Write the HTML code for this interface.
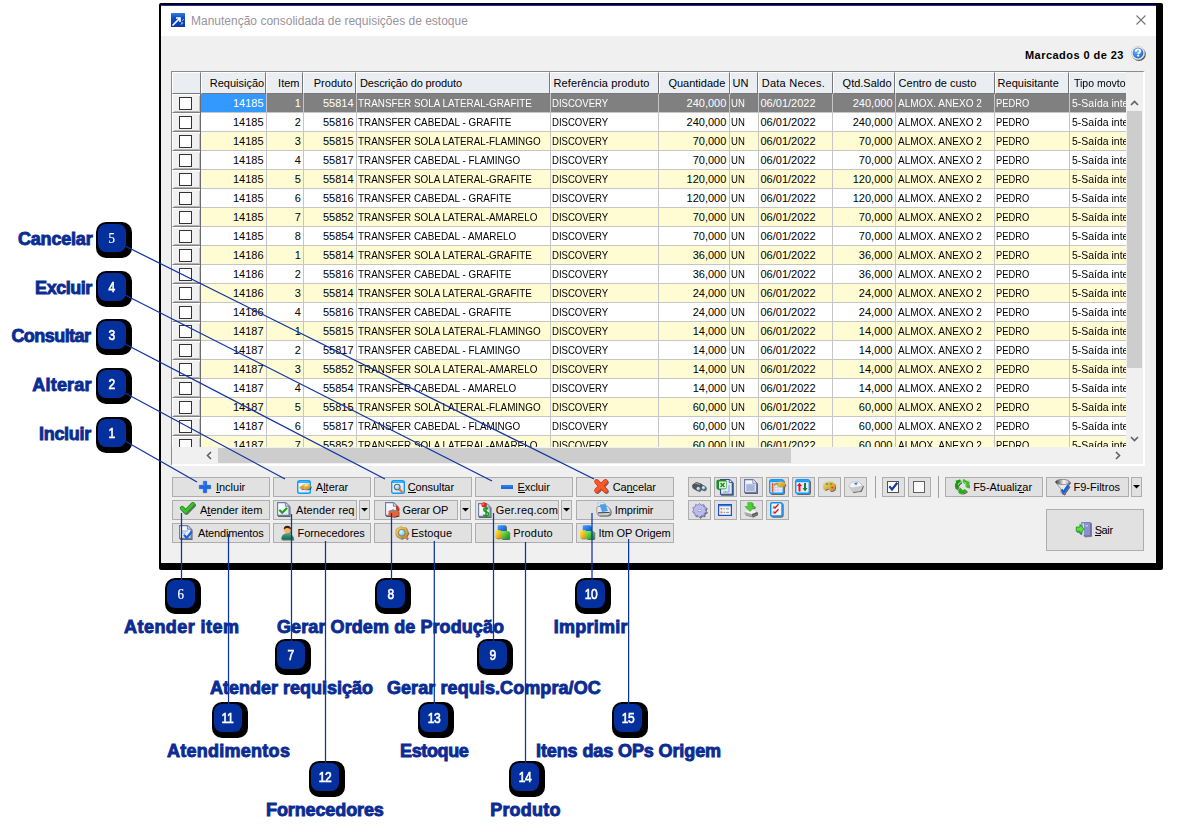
<!DOCTYPE html>
<html><head><meta charset="utf-8"><title>Manutenção consolidada de requisições de estoque</title>
<style>
*{box-sizing:border-box}
body{margin:0;width:1180px;height:838px;background:#fff;position:relative;overflow:hidden;font-family:"Liberation Sans",sans-serif;font-size:11px;color:#000}
.a{position:absolute}
.t{position:absolute;white-space:nowrap;line-height:1}
.btn{position:absolute;background:#e1e1e1;border:1px solid #adadad}
.hc{position:absolute;top:72px;height:22px;background:#eaedf1;border-top:1px solid #fff;border-left:1px solid #fff;border-right:1px solid #76787c;border-bottom:1px solid #76787c}
.lbl{position:absolute;white-space:nowrap;line-height:1;font-weight:bold;font-size:18px;color:#0b2c92;-webkit-text-stroke:0.9px #0b2c92}
.bub{position:absolute;width:36px;height:36px;background:#000;border-radius:10px}
.bub i{position:absolute;left:2px;top:2px;width:28px;height:28px;background:#04309e;border-radius:8px;font-style:normal;color:#fff;font-weight:normal;font-size:14px;line-height:28px;text-align:center;-webkit-text-stroke:0.6px #fff}
.bub i.s{font-family:"Liberation Serif",serif;font-size:15px;-webkit-text-stroke:0.2px #fff}
.bub i.d{letter-spacing:-0.4px;text-indent:-0.4px}
.bub b{display:inline-block;font-weight:normal;transform:scaleX(0.86)}
</style></head><body>

<div class="a" style="left:159px;top:3px;width:1004px;height:567px;background:#000;border-radius:2px"></div>
<div class="a" style="left:161px;top:5px;width:995px;height:558px;background:#f0f0f0"></div>
<div class="a" style="left:161px;top:5px;width:995px;height:1px;background:#2424c8"></div>
<div class="a" style="left:161px;top:6px;width:995px;height:30px;background:#fff"></div>
<svg class="a" style="left:171px;top:13px" width="14" height="14" viewBox="0 0 14 14">
<defs><linearGradient id="tg" x1="0" y1="0" x2="0" y2="1"><stop offset="0" stop-color="#3a7ae0"/><stop offset="0.35" stop-color="#0c4cc0"/><stop offset="1" stop-color="#0a3aa8"/></linearGradient></defs>
<rect width="14" height="14" fill="url(#tg)"/>
<path d="M1.5 12.5 L8 6 M5 5 L9 5 L9 9" stroke="#fff" stroke-width="1.6" fill="none"/>
<path d="M10 12 l1-3 l1 2 M11 8 l2-2" stroke="#9cc0f0" stroke-width="0.8" fill="none"/>
</svg>
<div class="t" style="left:191px;top:15px;font-size:12px;color:#9a939c">Manutenção consolidada de requisições de estoque</div>
<svg class="a" style="left:1136px;top:15px" width="10" height="10"><path d="M0.5 0.5 L9.5 9.5 M9.5 0.5 L0.5 9.5" stroke="#767676" stroke-width="1.1"/></svg>
<div class="t" style="left:1025px;top:50px;font-weight:bold;letter-spacing:0.45px;color:#000">Marcados 0 de 23</div>
<svg class="a" style="left:1130px;top:45px" width="18" height="18" viewBox="0 0 18 18">
<defs><radialGradient id="hg" cx="0.4" cy="0.35" r="0.75"><stop offset="0" stop-color="#7ab8f8"/><stop offset="0.7" stop-color="#2a7ae0"/><stop offset="1" stop-color="#1a5cc0"/></radialGradient>
<filter id="hb"><feGaussianBlur stdDeviation="0.7"/></filter></defs>
<circle cx="9" cy="9.2" r="6.8" fill="#3a3a3a" filter="url(#hb)" opacity="0.85"/>
<circle cx="8" cy="8" r="6.7" fill="#f4f0ec" stroke="#c8c0b8" stroke-width="0.6"/>
<circle cx="8" cy="8" r="5.4" fill="url(#hg)"/>
<path d="M5.7 6.6 Q5.8 4.4 8 4.4 Q10.3 4.4 10.3 6.3 Q10.3 7.5 8.6 8.2 L8.1 9" stroke="#fff" stroke-width="1.7" fill="none"/>
<rect x="7.2" y="9.9" width="2" height="1.6" fill="#fff"/>
</svg>
<div class="a" style="left:171px;top:71px;width:974px;height:395px;background:#f0f0f0;border-top:1px solid #8c8c8c;border-left:1px solid #8c8c8c;border-right:2px solid #fff;border-bottom:2px solid #fff"></div>
<div class="hc" style="left:172px;width:29px"></div>
<div class="hc" style="left:201px;width:65px"></div>
<div class="hc" style="left:266px;width:37px"></div>
<div class="hc" style="left:303px;width:53px"></div>
<div class="hc" style="left:356px;width:194px"></div>
<div class="hc" style="left:550px;width:109px"></div>
<div class="hc" style="left:659px;width:71px"></div>
<div class="hc" style="left:730px;width:28px"></div>
<div class="hc" style="left:758px;width:75px"></div>
<div class="hc" style="left:833px;width:62px"></div>
<div class="hc" style="left:895px;width:100px"></div>
<div class="hc" style="left:995px;width:74px"></div>
<div class="hc" style="left:1069px;width:57px;border-right:none"></div>
<div class="t" style="left:144.2px;width:120px;text-align:right;top:78px">Requisição</div>
<div class="t" style="left:179.5px;width:120px;text-align:right;top:78px">Item</div>
<div class="t" style="left:232.3px;width:120px;text-align:right;top:78px">Produto</div>
<div class="t" style="left:360px;top:78px;letter-spacing:-0.13px">Descrição do produto</div>
<div class="t" style="left:553.5px;top:78px;letter-spacing:0.14px">Referência produto</div>
<div class="t" style="left:605.3px;width:120px;text-align:right;top:78px">Quantidade</div>
<div class="t" style="left:732.6px;top:78px;letter-spacing:0px">UN</div>
<div class="t" style="left:761.7px;top:78px;letter-spacing:0.26px">Data Neces.</div>
<div class="t" style="left:771.5px;width:120px;text-align:right;top:78px">Qtd.Saldo</div>
<div class="t" style="left:898.6px;top:78px;letter-spacing:0px">Centro de custo</div>
<div class="t" style="left:997.6px;top:78px;letter-spacing:0px">Requisitante</div>
<div class="a" style="left:1073.8px;top:74px;overflow:hidden;height:18px;width:52.200000000000045px"><div class="t" style="left:0;top:4px;transform:scaleX(0.955);transform-origin:0 0">Tipo movto</div></div>
<div class="a" style="left:172px;top:94px;width:954px;height:353px;overflow:hidden">
<div class="a" style="left:0;top:0px;width:28px;height:19px;background:#f0f0f0;border-top:1px solid #fff;border-left:1px solid #fff;border-bottom:1px solid #808080"></div>
<div class="a" style="left:2px;top:17px;width:26px;height:1px;background:#b4b4b4"></div>
<div class="a" style="left:27px;top:2px;width:1px;height:16px;background:#c4c4c4"></div>
<div class="a" style="left:7px;top:3px;width:13px;height:13px;background:#fff;border:1px solid #333"></div>
<div class="a" style="left:29px;top:0px;width:925px;height:18px;background:#808080"></div>
<div class="a" style="left:29px;top:0px;width:65px;height:18px;background:#3399ff"></div>
<div class="a" style="left:29px;top:18px;width:925px;height:1px;background:#c6c6c6"></div>
<div class="t" style="left:-8.5px;width:100px;text-align:right;top:4px;color:#fff">14185</div>
<div class="t" style="left:28.8px;width:100px;text-align:right;top:4px;color:#fff">1</div>
<div class="t" style="left:81.5px;width:100px;text-align:right;top:4px;color:#fff">55814</div>
<div class="t" style="left:185.6px;top:4px;color:#fff;transform:scaleX(0.898);transform-origin:0 0;">TRANSFER SOLA LATERAL-GRAFITE</div>
<div class="t" style="left:380.2px;top:4px;color:#fff;transform:scaleX(0.87);transform-origin:0 0;">DISCOVERY</div>
<div class="t" style="left:454.3px;width:100px;text-align:right;top:4px;color:#fff">240,000</div>
<div class="t" style="left:558.9px;top:4px;color:#fff;transform:scaleX(0.87);transform-origin:0 0;">UN</div>
<div class="t" style="left:588.5px;top:4px;color:#fff;">06/01/2022</div>
<div class="t" style="left:620.5px;width:100px;text-align:right;top:4px;color:#fff">240,000</div>
<div class="t" style="left:725.6px;top:4px;color:#fff;transform:scaleX(0.915);transform-origin:0 0;">ALMOX. ANEXO 2</div>
<div class="t" style="left:823.8px;top:4px;color:#fff;transform:scaleX(0.85);transform-origin:0 0;">PEDRO</div>
<div class="t" style="left:899.8px;top:4px;color:#fff;transform:scaleX(0.95);transform-origin:0 0;">5-Saída interna</div>
<div class="a" style="left:94px;top:0px;width:1px;height:18px;background:#c6c6c6"></div>
<div class="a" style="left:131px;top:0px;width:1px;height:18px;background:#c6c6c6"></div>
<div class="a" style="left:184px;top:0px;width:1px;height:18px;background:#c6c6c6"></div>
<div class="a" style="left:378px;top:0px;width:1px;height:18px;background:#c6c6c6"></div>
<div class="a" style="left:486px;top:0px;width:1px;height:18px;background:#c6c6c6"></div>
<div class="a" style="left:557px;top:0px;width:1px;height:18px;background:#c6c6c6"></div>
<div class="a" style="left:586px;top:0px;width:1px;height:18px;background:#c6c6c6"></div>
<div class="a" style="left:660px;top:0px;width:1px;height:18px;background:#c6c6c6"></div>
<div class="a" style="left:723px;top:0px;width:1px;height:18px;background:#c6c6c6"></div>
<div class="a" style="left:822px;top:0px;width:1px;height:18px;background:#c6c6c6"></div>
<div class="a" style="left:897px;top:0px;width:1px;height:18px;background:#c6c6c6"></div>
<div class="a" style="left:28px;top:0px;width:1px;height:19px;background:#6c6c70"></div>
<div class="a" style="left:0;top:19px;width:28px;height:19px;background:#f0f0f0;border-top:1px solid #fff;border-left:1px solid #fff;border-bottom:1px solid #808080"></div>
<div class="a" style="left:2px;top:36px;width:26px;height:1px;background:#b4b4b4"></div>
<div class="a" style="left:27px;top:21px;width:1px;height:16px;background:#c4c4c4"></div>
<div class="a" style="left:7px;top:22px;width:13px;height:13px;background:#fff;border:1px solid #333"></div>
<div class="a" style="left:29px;top:19px;width:925px;height:18px;background:#ffffff"></div>
<div class="a" style="left:29px;top:37px;width:925px;height:1px;background:#c6c6c6"></div>
<div class="t" style="left:-8.5px;width:100px;text-align:right;top:23px;color:#000">14185</div>
<div class="t" style="left:28.8px;width:100px;text-align:right;top:23px;color:#000">2</div>
<div class="t" style="left:81.5px;width:100px;text-align:right;top:23px;color:#000">55816</div>
<div class="t" style="left:185.6px;top:23px;color:#000;transform:scaleX(0.898);transform-origin:0 0;">TRANSFER CABEDAL - GRAFITE</div>
<div class="t" style="left:380.2px;top:23px;color:#000;transform:scaleX(0.87);transform-origin:0 0;">DISCOVERY</div>
<div class="t" style="left:454.3px;width:100px;text-align:right;top:23px;color:#000">240,000</div>
<div class="t" style="left:558.9px;top:23px;color:#000;transform:scaleX(0.87);transform-origin:0 0;">UN</div>
<div class="t" style="left:588.5px;top:23px;color:#000;">06/01/2022</div>
<div class="t" style="left:620.5px;width:100px;text-align:right;top:23px;color:#000">240,000</div>
<div class="t" style="left:725.6px;top:23px;color:#000;transform:scaleX(0.915);transform-origin:0 0;">ALMOX. ANEXO 2</div>
<div class="t" style="left:823.8px;top:23px;color:#000;transform:scaleX(0.85);transform-origin:0 0;">PEDRO</div>
<div class="t" style="left:899.8px;top:23px;color:#000;transform:scaleX(0.95);transform-origin:0 0;">5-Saída interna</div>
<div class="a" style="left:94px;top:19px;width:1px;height:18px;background:#c6c6c6"></div>
<div class="a" style="left:131px;top:19px;width:1px;height:18px;background:#c6c6c6"></div>
<div class="a" style="left:184px;top:19px;width:1px;height:18px;background:#c6c6c6"></div>
<div class="a" style="left:378px;top:19px;width:1px;height:18px;background:#c6c6c6"></div>
<div class="a" style="left:486px;top:19px;width:1px;height:18px;background:#c6c6c6"></div>
<div class="a" style="left:557px;top:19px;width:1px;height:18px;background:#c6c6c6"></div>
<div class="a" style="left:586px;top:19px;width:1px;height:18px;background:#c6c6c6"></div>
<div class="a" style="left:660px;top:19px;width:1px;height:18px;background:#c6c6c6"></div>
<div class="a" style="left:723px;top:19px;width:1px;height:18px;background:#c6c6c6"></div>
<div class="a" style="left:822px;top:19px;width:1px;height:18px;background:#c6c6c6"></div>
<div class="a" style="left:897px;top:19px;width:1px;height:18px;background:#c6c6c6"></div>
<div class="a" style="left:28px;top:19px;width:1px;height:19px;background:#6c6c70"></div>
<div class="a" style="left:0;top:38px;width:28px;height:19px;background:#f0f0f0;border-top:1px solid #fff;border-left:1px solid #fff;border-bottom:1px solid #808080"></div>
<div class="a" style="left:2px;top:55px;width:26px;height:1px;background:#b4b4b4"></div>
<div class="a" style="left:27px;top:40px;width:1px;height:16px;background:#c4c4c4"></div>
<div class="a" style="left:7px;top:41px;width:13px;height:13px;background:#fff;border:1px solid #333"></div>
<div class="a" style="left:29px;top:38px;width:925px;height:18px;background:#fffcd4"></div>
<div class="a" style="left:29px;top:56px;width:925px;height:1px;background:#c6c6c6"></div>
<div class="t" style="left:-8.5px;width:100px;text-align:right;top:42px;color:#000">14185</div>
<div class="t" style="left:28.8px;width:100px;text-align:right;top:42px;color:#000">3</div>
<div class="t" style="left:81.5px;width:100px;text-align:right;top:42px;color:#000">55815</div>
<div class="t" style="left:185.6px;top:42px;color:#000;transform:scaleX(0.898);transform-origin:0 0;">TRANSFER SOLA LATERAL-FLAMINGO</div>
<div class="t" style="left:380.2px;top:42px;color:#000;transform:scaleX(0.87);transform-origin:0 0;">DISCOVERY</div>
<div class="t" style="left:454.3px;width:100px;text-align:right;top:42px;color:#000">70,000</div>
<div class="t" style="left:558.9px;top:42px;color:#000;transform:scaleX(0.87);transform-origin:0 0;">UN</div>
<div class="t" style="left:588.5px;top:42px;color:#000;">06/01/2022</div>
<div class="t" style="left:620.5px;width:100px;text-align:right;top:42px;color:#000">70,000</div>
<div class="t" style="left:725.6px;top:42px;color:#000;transform:scaleX(0.915);transform-origin:0 0;">ALMOX. ANEXO 2</div>
<div class="t" style="left:823.8px;top:42px;color:#000;transform:scaleX(0.85);transform-origin:0 0;">PEDRO</div>
<div class="t" style="left:899.8px;top:42px;color:#000;transform:scaleX(0.95);transform-origin:0 0;">5-Saída interna</div>
<div class="a" style="left:94px;top:38px;width:1px;height:18px;background:#c6c6c6"></div>
<div class="a" style="left:131px;top:38px;width:1px;height:18px;background:#c6c6c6"></div>
<div class="a" style="left:184px;top:38px;width:1px;height:18px;background:#c6c6c6"></div>
<div class="a" style="left:378px;top:38px;width:1px;height:18px;background:#c6c6c6"></div>
<div class="a" style="left:486px;top:38px;width:1px;height:18px;background:#c6c6c6"></div>
<div class="a" style="left:557px;top:38px;width:1px;height:18px;background:#c6c6c6"></div>
<div class="a" style="left:586px;top:38px;width:1px;height:18px;background:#c6c6c6"></div>
<div class="a" style="left:660px;top:38px;width:1px;height:18px;background:#c6c6c6"></div>
<div class="a" style="left:723px;top:38px;width:1px;height:18px;background:#c6c6c6"></div>
<div class="a" style="left:822px;top:38px;width:1px;height:18px;background:#c6c6c6"></div>
<div class="a" style="left:897px;top:38px;width:1px;height:18px;background:#c6c6c6"></div>
<div class="a" style="left:28px;top:38px;width:1px;height:19px;background:#6c6c70"></div>
<div class="a" style="left:0;top:57px;width:28px;height:19px;background:#f0f0f0;border-top:1px solid #fff;border-left:1px solid #fff;border-bottom:1px solid #808080"></div>
<div class="a" style="left:2px;top:74px;width:26px;height:1px;background:#b4b4b4"></div>
<div class="a" style="left:27px;top:59px;width:1px;height:16px;background:#c4c4c4"></div>
<div class="a" style="left:7px;top:60px;width:13px;height:13px;background:#fff;border:1px solid #333"></div>
<div class="a" style="left:29px;top:57px;width:925px;height:18px;background:#ffffff"></div>
<div class="a" style="left:29px;top:75px;width:925px;height:1px;background:#c6c6c6"></div>
<div class="t" style="left:-8.5px;width:100px;text-align:right;top:61px;color:#000">14185</div>
<div class="t" style="left:28.8px;width:100px;text-align:right;top:61px;color:#000">4</div>
<div class="t" style="left:81.5px;width:100px;text-align:right;top:61px;color:#000">55817</div>
<div class="t" style="left:185.6px;top:61px;color:#000;transform:scaleX(0.898);transform-origin:0 0;">TRANSFER CABEDAL - FLAMINGO</div>
<div class="t" style="left:380.2px;top:61px;color:#000;transform:scaleX(0.87);transform-origin:0 0;">DISCOVERY</div>
<div class="t" style="left:454.3px;width:100px;text-align:right;top:61px;color:#000">70,000</div>
<div class="t" style="left:558.9px;top:61px;color:#000;transform:scaleX(0.87);transform-origin:0 0;">UN</div>
<div class="t" style="left:588.5px;top:61px;color:#000;">06/01/2022</div>
<div class="t" style="left:620.5px;width:100px;text-align:right;top:61px;color:#000">70,000</div>
<div class="t" style="left:725.6px;top:61px;color:#000;transform:scaleX(0.915);transform-origin:0 0;">ALMOX. ANEXO 2</div>
<div class="t" style="left:823.8px;top:61px;color:#000;transform:scaleX(0.85);transform-origin:0 0;">PEDRO</div>
<div class="t" style="left:899.8px;top:61px;color:#000;transform:scaleX(0.95);transform-origin:0 0;">5-Saída interna</div>
<div class="a" style="left:94px;top:57px;width:1px;height:18px;background:#c6c6c6"></div>
<div class="a" style="left:131px;top:57px;width:1px;height:18px;background:#c6c6c6"></div>
<div class="a" style="left:184px;top:57px;width:1px;height:18px;background:#c6c6c6"></div>
<div class="a" style="left:378px;top:57px;width:1px;height:18px;background:#c6c6c6"></div>
<div class="a" style="left:486px;top:57px;width:1px;height:18px;background:#c6c6c6"></div>
<div class="a" style="left:557px;top:57px;width:1px;height:18px;background:#c6c6c6"></div>
<div class="a" style="left:586px;top:57px;width:1px;height:18px;background:#c6c6c6"></div>
<div class="a" style="left:660px;top:57px;width:1px;height:18px;background:#c6c6c6"></div>
<div class="a" style="left:723px;top:57px;width:1px;height:18px;background:#c6c6c6"></div>
<div class="a" style="left:822px;top:57px;width:1px;height:18px;background:#c6c6c6"></div>
<div class="a" style="left:897px;top:57px;width:1px;height:18px;background:#c6c6c6"></div>
<div class="a" style="left:28px;top:57px;width:1px;height:19px;background:#6c6c70"></div>
<div class="a" style="left:0;top:76px;width:28px;height:19px;background:#f0f0f0;border-top:1px solid #fff;border-left:1px solid #fff;border-bottom:1px solid #808080"></div>
<div class="a" style="left:2px;top:93px;width:26px;height:1px;background:#b4b4b4"></div>
<div class="a" style="left:27px;top:78px;width:1px;height:16px;background:#c4c4c4"></div>
<div class="a" style="left:7px;top:79px;width:13px;height:13px;background:#fff;border:1px solid #333"></div>
<div class="a" style="left:29px;top:76px;width:925px;height:18px;background:#fffcd4"></div>
<div class="a" style="left:29px;top:94px;width:925px;height:1px;background:#c6c6c6"></div>
<div class="t" style="left:-8.5px;width:100px;text-align:right;top:80px;color:#000">14185</div>
<div class="t" style="left:28.8px;width:100px;text-align:right;top:80px;color:#000">5</div>
<div class="t" style="left:81.5px;width:100px;text-align:right;top:80px;color:#000">55814</div>
<div class="t" style="left:185.6px;top:80px;color:#000;transform:scaleX(0.898);transform-origin:0 0;">TRANSFER SOLA LATERAL-GRAFITE</div>
<div class="t" style="left:380.2px;top:80px;color:#000;transform:scaleX(0.87);transform-origin:0 0;">DISCOVERY</div>
<div class="t" style="left:454.3px;width:100px;text-align:right;top:80px;color:#000">120,000</div>
<div class="t" style="left:558.9px;top:80px;color:#000;transform:scaleX(0.87);transform-origin:0 0;">UN</div>
<div class="t" style="left:588.5px;top:80px;color:#000;">06/01/2022</div>
<div class="t" style="left:620.5px;width:100px;text-align:right;top:80px;color:#000">120,000</div>
<div class="t" style="left:725.6px;top:80px;color:#000;transform:scaleX(0.915);transform-origin:0 0;">ALMOX. ANEXO 2</div>
<div class="t" style="left:823.8px;top:80px;color:#000;transform:scaleX(0.85);transform-origin:0 0;">PEDRO</div>
<div class="t" style="left:899.8px;top:80px;color:#000;transform:scaleX(0.95);transform-origin:0 0;">5-Saída interna</div>
<div class="a" style="left:94px;top:76px;width:1px;height:18px;background:#c6c6c6"></div>
<div class="a" style="left:131px;top:76px;width:1px;height:18px;background:#c6c6c6"></div>
<div class="a" style="left:184px;top:76px;width:1px;height:18px;background:#c6c6c6"></div>
<div class="a" style="left:378px;top:76px;width:1px;height:18px;background:#c6c6c6"></div>
<div class="a" style="left:486px;top:76px;width:1px;height:18px;background:#c6c6c6"></div>
<div class="a" style="left:557px;top:76px;width:1px;height:18px;background:#c6c6c6"></div>
<div class="a" style="left:586px;top:76px;width:1px;height:18px;background:#c6c6c6"></div>
<div class="a" style="left:660px;top:76px;width:1px;height:18px;background:#c6c6c6"></div>
<div class="a" style="left:723px;top:76px;width:1px;height:18px;background:#c6c6c6"></div>
<div class="a" style="left:822px;top:76px;width:1px;height:18px;background:#c6c6c6"></div>
<div class="a" style="left:897px;top:76px;width:1px;height:18px;background:#c6c6c6"></div>
<div class="a" style="left:28px;top:76px;width:1px;height:19px;background:#6c6c70"></div>
<div class="a" style="left:0;top:95px;width:28px;height:19px;background:#f0f0f0;border-top:1px solid #fff;border-left:1px solid #fff;border-bottom:1px solid #808080"></div>
<div class="a" style="left:2px;top:112px;width:26px;height:1px;background:#b4b4b4"></div>
<div class="a" style="left:27px;top:97px;width:1px;height:16px;background:#c4c4c4"></div>
<div class="a" style="left:7px;top:98px;width:13px;height:13px;background:#fff;border:1px solid #333"></div>
<div class="a" style="left:29px;top:95px;width:925px;height:18px;background:#ffffff"></div>
<div class="a" style="left:29px;top:113px;width:925px;height:1px;background:#c6c6c6"></div>
<div class="t" style="left:-8.5px;width:100px;text-align:right;top:99px;color:#000">14185</div>
<div class="t" style="left:28.8px;width:100px;text-align:right;top:99px;color:#000">6</div>
<div class="t" style="left:81.5px;width:100px;text-align:right;top:99px;color:#000">55816</div>
<div class="t" style="left:185.6px;top:99px;color:#000;transform:scaleX(0.898);transform-origin:0 0;">TRANSFER CABEDAL - GRAFITE</div>
<div class="t" style="left:380.2px;top:99px;color:#000;transform:scaleX(0.87);transform-origin:0 0;">DISCOVERY</div>
<div class="t" style="left:454.3px;width:100px;text-align:right;top:99px;color:#000">120,000</div>
<div class="t" style="left:558.9px;top:99px;color:#000;transform:scaleX(0.87);transform-origin:0 0;">UN</div>
<div class="t" style="left:588.5px;top:99px;color:#000;">06/01/2022</div>
<div class="t" style="left:620.5px;width:100px;text-align:right;top:99px;color:#000">120,000</div>
<div class="t" style="left:725.6px;top:99px;color:#000;transform:scaleX(0.915);transform-origin:0 0;">ALMOX. ANEXO 2</div>
<div class="t" style="left:823.8px;top:99px;color:#000;transform:scaleX(0.85);transform-origin:0 0;">PEDRO</div>
<div class="t" style="left:899.8px;top:99px;color:#000;transform:scaleX(0.95);transform-origin:0 0;">5-Saída interna</div>
<div class="a" style="left:94px;top:95px;width:1px;height:18px;background:#c6c6c6"></div>
<div class="a" style="left:131px;top:95px;width:1px;height:18px;background:#c6c6c6"></div>
<div class="a" style="left:184px;top:95px;width:1px;height:18px;background:#c6c6c6"></div>
<div class="a" style="left:378px;top:95px;width:1px;height:18px;background:#c6c6c6"></div>
<div class="a" style="left:486px;top:95px;width:1px;height:18px;background:#c6c6c6"></div>
<div class="a" style="left:557px;top:95px;width:1px;height:18px;background:#c6c6c6"></div>
<div class="a" style="left:586px;top:95px;width:1px;height:18px;background:#c6c6c6"></div>
<div class="a" style="left:660px;top:95px;width:1px;height:18px;background:#c6c6c6"></div>
<div class="a" style="left:723px;top:95px;width:1px;height:18px;background:#c6c6c6"></div>
<div class="a" style="left:822px;top:95px;width:1px;height:18px;background:#c6c6c6"></div>
<div class="a" style="left:897px;top:95px;width:1px;height:18px;background:#c6c6c6"></div>
<div class="a" style="left:28px;top:95px;width:1px;height:19px;background:#6c6c70"></div>
<div class="a" style="left:0;top:114px;width:28px;height:19px;background:#f0f0f0;border-top:1px solid #fff;border-left:1px solid #fff;border-bottom:1px solid #808080"></div>
<div class="a" style="left:2px;top:131px;width:26px;height:1px;background:#b4b4b4"></div>
<div class="a" style="left:27px;top:116px;width:1px;height:16px;background:#c4c4c4"></div>
<div class="a" style="left:7px;top:117px;width:13px;height:13px;background:#fff;border:1px solid #333"></div>
<div class="a" style="left:29px;top:114px;width:925px;height:18px;background:#fffcd4"></div>
<div class="a" style="left:29px;top:132px;width:925px;height:1px;background:#c6c6c6"></div>
<div class="t" style="left:-8.5px;width:100px;text-align:right;top:118px;color:#000">14185</div>
<div class="t" style="left:28.8px;width:100px;text-align:right;top:118px;color:#000">7</div>
<div class="t" style="left:81.5px;width:100px;text-align:right;top:118px;color:#000">55852</div>
<div class="t" style="left:185.6px;top:118px;color:#000;transform:scaleX(0.898);transform-origin:0 0;">TRANSFER SOLA LATERAL-AMARELO</div>
<div class="t" style="left:380.2px;top:118px;color:#000;transform:scaleX(0.87);transform-origin:0 0;">DISCOVERY</div>
<div class="t" style="left:454.3px;width:100px;text-align:right;top:118px;color:#000">70,000</div>
<div class="t" style="left:558.9px;top:118px;color:#000;transform:scaleX(0.87);transform-origin:0 0;">UN</div>
<div class="t" style="left:588.5px;top:118px;color:#000;">06/01/2022</div>
<div class="t" style="left:620.5px;width:100px;text-align:right;top:118px;color:#000">70,000</div>
<div class="t" style="left:725.6px;top:118px;color:#000;transform:scaleX(0.915);transform-origin:0 0;">ALMOX. ANEXO 2</div>
<div class="t" style="left:823.8px;top:118px;color:#000;transform:scaleX(0.85);transform-origin:0 0;">PEDRO</div>
<div class="t" style="left:899.8px;top:118px;color:#000;transform:scaleX(0.95);transform-origin:0 0;">5-Saída interna</div>
<div class="a" style="left:94px;top:114px;width:1px;height:18px;background:#c6c6c6"></div>
<div class="a" style="left:131px;top:114px;width:1px;height:18px;background:#c6c6c6"></div>
<div class="a" style="left:184px;top:114px;width:1px;height:18px;background:#c6c6c6"></div>
<div class="a" style="left:378px;top:114px;width:1px;height:18px;background:#c6c6c6"></div>
<div class="a" style="left:486px;top:114px;width:1px;height:18px;background:#c6c6c6"></div>
<div class="a" style="left:557px;top:114px;width:1px;height:18px;background:#c6c6c6"></div>
<div class="a" style="left:586px;top:114px;width:1px;height:18px;background:#c6c6c6"></div>
<div class="a" style="left:660px;top:114px;width:1px;height:18px;background:#c6c6c6"></div>
<div class="a" style="left:723px;top:114px;width:1px;height:18px;background:#c6c6c6"></div>
<div class="a" style="left:822px;top:114px;width:1px;height:18px;background:#c6c6c6"></div>
<div class="a" style="left:897px;top:114px;width:1px;height:18px;background:#c6c6c6"></div>
<div class="a" style="left:28px;top:114px;width:1px;height:19px;background:#6c6c70"></div>
<div class="a" style="left:0;top:133px;width:28px;height:19px;background:#f0f0f0;border-top:1px solid #fff;border-left:1px solid #fff;border-bottom:1px solid #808080"></div>
<div class="a" style="left:2px;top:150px;width:26px;height:1px;background:#b4b4b4"></div>
<div class="a" style="left:27px;top:135px;width:1px;height:16px;background:#c4c4c4"></div>
<div class="a" style="left:7px;top:136px;width:13px;height:13px;background:#fff;border:1px solid #333"></div>
<div class="a" style="left:29px;top:133px;width:925px;height:18px;background:#ffffff"></div>
<div class="a" style="left:29px;top:151px;width:925px;height:1px;background:#c6c6c6"></div>
<div class="t" style="left:-8.5px;width:100px;text-align:right;top:137px;color:#000">14185</div>
<div class="t" style="left:28.8px;width:100px;text-align:right;top:137px;color:#000">8</div>
<div class="t" style="left:81.5px;width:100px;text-align:right;top:137px;color:#000">55854</div>
<div class="t" style="left:185.6px;top:137px;color:#000;transform:scaleX(0.898);transform-origin:0 0;">TRANSFER CABEDAL - AMARELO</div>
<div class="t" style="left:380.2px;top:137px;color:#000;transform:scaleX(0.87);transform-origin:0 0;">DISCOVERY</div>
<div class="t" style="left:454.3px;width:100px;text-align:right;top:137px;color:#000">70,000</div>
<div class="t" style="left:558.9px;top:137px;color:#000;transform:scaleX(0.87);transform-origin:0 0;">UN</div>
<div class="t" style="left:588.5px;top:137px;color:#000;">06/01/2022</div>
<div class="t" style="left:620.5px;width:100px;text-align:right;top:137px;color:#000">70,000</div>
<div class="t" style="left:725.6px;top:137px;color:#000;transform:scaleX(0.915);transform-origin:0 0;">ALMOX. ANEXO 2</div>
<div class="t" style="left:823.8px;top:137px;color:#000;transform:scaleX(0.85);transform-origin:0 0;">PEDRO</div>
<div class="t" style="left:899.8px;top:137px;color:#000;transform:scaleX(0.95);transform-origin:0 0;">5-Saída interna</div>
<div class="a" style="left:94px;top:133px;width:1px;height:18px;background:#c6c6c6"></div>
<div class="a" style="left:131px;top:133px;width:1px;height:18px;background:#c6c6c6"></div>
<div class="a" style="left:184px;top:133px;width:1px;height:18px;background:#c6c6c6"></div>
<div class="a" style="left:378px;top:133px;width:1px;height:18px;background:#c6c6c6"></div>
<div class="a" style="left:486px;top:133px;width:1px;height:18px;background:#c6c6c6"></div>
<div class="a" style="left:557px;top:133px;width:1px;height:18px;background:#c6c6c6"></div>
<div class="a" style="left:586px;top:133px;width:1px;height:18px;background:#c6c6c6"></div>
<div class="a" style="left:660px;top:133px;width:1px;height:18px;background:#c6c6c6"></div>
<div class="a" style="left:723px;top:133px;width:1px;height:18px;background:#c6c6c6"></div>
<div class="a" style="left:822px;top:133px;width:1px;height:18px;background:#c6c6c6"></div>
<div class="a" style="left:897px;top:133px;width:1px;height:18px;background:#c6c6c6"></div>
<div class="a" style="left:28px;top:133px;width:1px;height:19px;background:#6c6c70"></div>
<div class="a" style="left:0;top:152px;width:28px;height:19px;background:#f0f0f0;border-top:1px solid #fff;border-left:1px solid #fff;border-bottom:1px solid #808080"></div>
<div class="a" style="left:2px;top:169px;width:26px;height:1px;background:#b4b4b4"></div>
<div class="a" style="left:27px;top:154px;width:1px;height:16px;background:#c4c4c4"></div>
<div class="a" style="left:7px;top:155px;width:13px;height:13px;background:#fff;border:1px solid #333"></div>
<div class="a" style="left:29px;top:152px;width:925px;height:18px;background:#fffcd4"></div>
<div class="a" style="left:29px;top:170px;width:925px;height:1px;background:#c6c6c6"></div>
<div class="t" style="left:-8.5px;width:100px;text-align:right;top:156px;color:#000">14186</div>
<div class="t" style="left:28.8px;width:100px;text-align:right;top:156px;color:#000">1</div>
<div class="t" style="left:81.5px;width:100px;text-align:right;top:156px;color:#000">55814</div>
<div class="t" style="left:185.6px;top:156px;color:#000;transform:scaleX(0.898);transform-origin:0 0;">TRANSFER SOLA LATERAL-GRAFITE</div>
<div class="t" style="left:380.2px;top:156px;color:#000;transform:scaleX(0.87);transform-origin:0 0;">DISCOVERY</div>
<div class="t" style="left:454.3px;width:100px;text-align:right;top:156px;color:#000">36,000</div>
<div class="t" style="left:558.9px;top:156px;color:#000;transform:scaleX(0.87);transform-origin:0 0;">UN</div>
<div class="t" style="left:588.5px;top:156px;color:#000;">06/01/2022</div>
<div class="t" style="left:620.5px;width:100px;text-align:right;top:156px;color:#000">36,000</div>
<div class="t" style="left:725.6px;top:156px;color:#000;transform:scaleX(0.915);transform-origin:0 0;">ALMOX. ANEXO 2</div>
<div class="t" style="left:823.8px;top:156px;color:#000;transform:scaleX(0.85);transform-origin:0 0;">PEDRO</div>
<div class="t" style="left:899.8px;top:156px;color:#000;transform:scaleX(0.95);transform-origin:0 0;">5-Saída interna</div>
<div class="a" style="left:94px;top:152px;width:1px;height:18px;background:#c6c6c6"></div>
<div class="a" style="left:131px;top:152px;width:1px;height:18px;background:#c6c6c6"></div>
<div class="a" style="left:184px;top:152px;width:1px;height:18px;background:#c6c6c6"></div>
<div class="a" style="left:378px;top:152px;width:1px;height:18px;background:#c6c6c6"></div>
<div class="a" style="left:486px;top:152px;width:1px;height:18px;background:#c6c6c6"></div>
<div class="a" style="left:557px;top:152px;width:1px;height:18px;background:#c6c6c6"></div>
<div class="a" style="left:586px;top:152px;width:1px;height:18px;background:#c6c6c6"></div>
<div class="a" style="left:660px;top:152px;width:1px;height:18px;background:#c6c6c6"></div>
<div class="a" style="left:723px;top:152px;width:1px;height:18px;background:#c6c6c6"></div>
<div class="a" style="left:822px;top:152px;width:1px;height:18px;background:#c6c6c6"></div>
<div class="a" style="left:897px;top:152px;width:1px;height:18px;background:#c6c6c6"></div>
<div class="a" style="left:28px;top:152px;width:1px;height:19px;background:#6c6c70"></div>
<div class="a" style="left:0;top:171px;width:28px;height:19px;background:#f0f0f0;border-top:1px solid #fff;border-left:1px solid #fff;border-bottom:1px solid #808080"></div>
<div class="a" style="left:2px;top:188px;width:26px;height:1px;background:#b4b4b4"></div>
<div class="a" style="left:27px;top:173px;width:1px;height:16px;background:#c4c4c4"></div>
<div class="a" style="left:7px;top:174px;width:13px;height:13px;background:#fff;border:1px solid #333"></div>
<div class="a" style="left:29px;top:171px;width:925px;height:18px;background:#ffffff"></div>
<div class="a" style="left:29px;top:189px;width:925px;height:1px;background:#c6c6c6"></div>
<div class="t" style="left:-8.5px;width:100px;text-align:right;top:175px;color:#000">14186</div>
<div class="t" style="left:28.8px;width:100px;text-align:right;top:175px;color:#000">2</div>
<div class="t" style="left:81.5px;width:100px;text-align:right;top:175px;color:#000">55816</div>
<div class="t" style="left:185.6px;top:175px;color:#000;transform:scaleX(0.898);transform-origin:0 0;">TRANSFER CABEDAL - GRAFITE</div>
<div class="t" style="left:380.2px;top:175px;color:#000;transform:scaleX(0.87);transform-origin:0 0;">DISCOVERY</div>
<div class="t" style="left:454.3px;width:100px;text-align:right;top:175px;color:#000">36,000</div>
<div class="t" style="left:558.9px;top:175px;color:#000;transform:scaleX(0.87);transform-origin:0 0;">UN</div>
<div class="t" style="left:588.5px;top:175px;color:#000;">06/01/2022</div>
<div class="t" style="left:620.5px;width:100px;text-align:right;top:175px;color:#000">36,000</div>
<div class="t" style="left:725.6px;top:175px;color:#000;transform:scaleX(0.915);transform-origin:0 0;">ALMOX. ANEXO 2</div>
<div class="t" style="left:823.8px;top:175px;color:#000;transform:scaleX(0.85);transform-origin:0 0;">PEDRO</div>
<div class="t" style="left:899.8px;top:175px;color:#000;transform:scaleX(0.95);transform-origin:0 0;">5-Saída interna</div>
<div class="a" style="left:94px;top:171px;width:1px;height:18px;background:#c6c6c6"></div>
<div class="a" style="left:131px;top:171px;width:1px;height:18px;background:#c6c6c6"></div>
<div class="a" style="left:184px;top:171px;width:1px;height:18px;background:#c6c6c6"></div>
<div class="a" style="left:378px;top:171px;width:1px;height:18px;background:#c6c6c6"></div>
<div class="a" style="left:486px;top:171px;width:1px;height:18px;background:#c6c6c6"></div>
<div class="a" style="left:557px;top:171px;width:1px;height:18px;background:#c6c6c6"></div>
<div class="a" style="left:586px;top:171px;width:1px;height:18px;background:#c6c6c6"></div>
<div class="a" style="left:660px;top:171px;width:1px;height:18px;background:#c6c6c6"></div>
<div class="a" style="left:723px;top:171px;width:1px;height:18px;background:#c6c6c6"></div>
<div class="a" style="left:822px;top:171px;width:1px;height:18px;background:#c6c6c6"></div>
<div class="a" style="left:897px;top:171px;width:1px;height:18px;background:#c6c6c6"></div>
<div class="a" style="left:28px;top:171px;width:1px;height:19px;background:#6c6c70"></div>
<div class="a" style="left:0;top:190px;width:28px;height:19px;background:#f0f0f0;border-top:1px solid #fff;border-left:1px solid #fff;border-bottom:1px solid #808080"></div>
<div class="a" style="left:2px;top:207px;width:26px;height:1px;background:#b4b4b4"></div>
<div class="a" style="left:27px;top:192px;width:1px;height:16px;background:#c4c4c4"></div>
<div class="a" style="left:7px;top:193px;width:13px;height:13px;background:#fff;border:1px solid #333"></div>
<div class="a" style="left:29px;top:190px;width:925px;height:18px;background:#fffcd4"></div>
<div class="a" style="left:29px;top:208px;width:925px;height:1px;background:#c6c6c6"></div>
<div class="t" style="left:-8.5px;width:100px;text-align:right;top:194px;color:#000">14186</div>
<div class="t" style="left:28.8px;width:100px;text-align:right;top:194px;color:#000">3</div>
<div class="t" style="left:81.5px;width:100px;text-align:right;top:194px;color:#000">55814</div>
<div class="t" style="left:185.6px;top:194px;color:#000;transform:scaleX(0.898);transform-origin:0 0;">TRANSFER SOLA LATERAL-GRAFITE</div>
<div class="t" style="left:380.2px;top:194px;color:#000;transform:scaleX(0.87);transform-origin:0 0;">DISCOVERY</div>
<div class="t" style="left:454.3px;width:100px;text-align:right;top:194px;color:#000">24,000</div>
<div class="t" style="left:558.9px;top:194px;color:#000;transform:scaleX(0.87);transform-origin:0 0;">UN</div>
<div class="t" style="left:588.5px;top:194px;color:#000;">06/01/2022</div>
<div class="t" style="left:620.5px;width:100px;text-align:right;top:194px;color:#000">24,000</div>
<div class="t" style="left:725.6px;top:194px;color:#000;transform:scaleX(0.915);transform-origin:0 0;">ALMOX. ANEXO 2</div>
<div class="t" style="left:823.8px;top:194px;color:#000;transform:scaleX(0.85);transform-origin:0 0;">PEDRO</div>
<div class="t" style="left:899.8px;top:194px;color:#000;transform:scaleX(0.95);transform-origin:0 0;">5-Saída interna</div>
<div class="a" style="left:94px;top:190px;width:1px;height:18px;background:#c6c6c6"></div>
<div class="a" style="left:131px;top:190px;width:1px;height:18px;background:#c6c6c6"></div>
<div class="a" style="left:184px;top:190px;width:1px;height:18px;background:#c6c6c6"></div>
<div class="a" style="left:378px;top:190px;width:1px;height:18px;background:#c6c6c6"></div>
<div class="a" style="left:486px;top:190px;width:1px;height:18px;background:#c6c6c6"></div>
<div class="a" style="left:557px;top:190px;width:1px;height:18px;background:#c6c6c6"></div>
<div class="a" style="left:586px;top:190px;width:1px;height:18px;background:#c6c6c6"></div>
<div class="a" style="left:660px;top:190px;width:1px;height:18px;background:#c6c6c6"></div>
<div class="a" style="left:723px;top:190px;width:1px;height:18px;background:#c6c6c6"></div>
<div class="a" style="left:822px;top:190px;width:1px;height:18px;background:#c6c6c6"></div>
<div class="a" style="left:897px;top:190px;width:1px;height:18px;background:#c6c6c6"></div>
<div class="a" style="left:28px;top:190px;width:1px;height:19px;background:#6c6c70"></div>
<div class="a" style="left:0;top:209px;width:28px;height:19px;background:#f0f0f0;border-top:1px solid #fff;border-left:1px solid #fff;border-bottom:1px solid #808080"></div>
<div class="a" style="left:2px;top:226px;width:26px;height:1px;background:#b4b4b4"></div>
<div class="a" style="left:27px;top:211px;width:1px;height:16px;background:#c4c4c4"></div>
<div class="a" style="left:7px;top:212px;width:13px;height:13px;background:#fff;border:1px solid #333"></div>
<div class="a" style="left:29px;top:209px;width:925px;height:18px;background:#ffffff"></div>
<div class="a" style="left:29px;top:227px;width:925px;height:1px;background:#c6c6c6"></div>
<div class="t" style="left:-8.5px;width:100px;text-align:right;top:213px;color:#000">14186</div>
<div class="t" style="left:28.8px;width:100px;text-align:right;top:213px;color:#000">4</div>
<div class="t" style="left:81.5px;width:100px;text-align:right;top:213px;color:#000">55816</div>
<div class="t" style="left:185.6px;top:213px;color:#000;transform:scaleX(0.898);transform-origin:0 0;">TRANSFER CABEDAL - GRAFITE</div>
<div class="t" style="left:380.2px;top:213px;color:#000;transform:scaleX(0.87);transform-origin:0 0;">DISCOVERY</div>
<div class="t" style="left:454.3px;width:100px;text-align:right;top:213px;color:#000">24,000</div>
<div class="t" style="left:558.9px;top:213px;color:#000;transform:scaleX(0.87);transform-origin:0 0;">UN</div>
<div class="t" style="left:588.5px;top:213px;color:#000;">06/01/2022</div>
<div class="t" style="left:620.5px;width:100px;text-align:right;top:213px;color:#000">24,000</div>
<div class="t" style="left:725.6px;top:213px;color:#000;transform:scaleX(0.915);transform-origin:0 0;">ALMOX. ANEXO 2</div>
<div class="t" style="left:823.8px;top:213px;color:#000;transform:scaleX(0.85);transform-origin:0 0;">PEDRO</div>
<div class="t" style="left:899.8px;top:213px;color:#000;transform:scaleX(0.95);transform-origin:0 0;">5-Saída interna</div>
<div class="a" style="left:94px;top:209px;width:1px;height:18px;background:#c6c6c6"></div>
<div class="a" style="left:131px;top:209px;width:1px;height:18px;background:#c6c6c6"></div>
<div class="a" style="left:184px;top:209px;width:1px;height:18px;background:#c6c6c6"></div>
<div class="a" style="left:378px;top:209px;width:1px;height:18px;background:#c6c6c6"></div>
<div class="a" style="left:486px;top:209px;width:1px;height:18px;background:#c6c6c6"></div>
<div class="a" style="left:557px;top:209px;width:1px;height:18px;background:#c6c6c6"></div>
<div class="a" style="left:586px;top:209px;width:1px;height:18px;background:#c6c6c6"></div>
<div class="a" style="left:660px;top:209px;width:1px;height:18px;background:#c6c6c6"></div>
<div class="a" style="left:723px;top:209px;width:1px;height:18px;background:#c6c6c6"></div>
<div class="a" style="left:822px;top:209px;width:1px;height:18px;background:#c6c6c6"></div>
<div class="a" style="left:897px;top:209px;width:1px;height:18px;background:#c6c6c6"></div>
<div class="a" style="left:28px;top:209px;width:1px;height:19px;background:#6c6c70"></div>
<div class="a" style="left:0;top:228px;width:28px;height:19px;background:#f0f0f0;border-top:1px solid #fff;border-left:1px solid #fff;border-bottom:1px solid #808080"></div>
<div class="a" style="left:2px;top:245px;width:26px;height:1px;background:#b4b4b4"></div>
<div class="a" style="left:27px;top:230px;width:1px;height:16px;background:#c4c4c4"></div>
<div class="a" style="left:7px;top:231px;width:13px;height:13px;background:#fff;border:1px solid #333"></div>
<div class="a" style="left:29px;top:228px;width:925px;height:18px;background:#fffcd4"></div>
<div class="a" style="left:29px;top:246px;width:925px;height:1px;background:#c6c6c6"></div>
<div class="t" style="left:-8.5px;width:100px;text-align:right;top:232px;color:#000">14187</div>
<div class="t" style="left:28.8px;width:100px;text-align:right;top:232px;color:#000">1</div>
<div class="t" style="left:81.5px;width:100px;text-align:right;top:232px;color:#000">55815</div>
<div class="t" style="left:185.6px;top:232px;color:#000;transform:scaleX(0.898);transform-origin:0 0;">TRANSFER SOLA LATERAL-FLAMINGO</div>
<div class="t" style="left:380.2px;top:232px;color:#000;transform:scaleX(0.87);transform-origin:0 0;">DISCOVERY</div>
<div class="t" style="left:454.3px;width:100px;text-align:right;top:232px;color:#000">14,000</div>
<div class="t" style="left:558.9px;top:232px;color:#000;transform:scaleX(0.87);transform-origin:0 0;">UN</div>
<div class="t" style="left:588.5px;top:232px;color:#000;">06/01/2022</div>
<div class="t" style="left:620.5px;width:100px;text-align:right;top:232px;color:#000">14,000</div>
<div class="t" style="left:725.6px;top:232px;color:#000;transform:scaleX(0.915);transform-origin:0 0;">ALMOX. ANEXO 2</div>
<div class="t" style="left:823.8px;top:232px;color:#000;transform:scaleX(0.85);transform-origin:0 0;">PEDRO</div>
<div class="t" style="left:899.8px;top:232px;color:#000;transform:scaleX(0.95);transform-origin:0 0;">5-Saída interna</div>
<div class="a" style="left:94px;top:228px;width:1px;height:18px;background:#c6c6c6"></div>
<div class="a" style="left:131px;top:228px;width:1px;height:18px;background:#c6c6c6"></div>
<div class="a" style="left:184px;top:228px;width:1px;height:18px;background:#c6c6c6"></div>
<div class="a" style="left:378px;top:228px;width:1px;height:18px;background:#c6c6c6"></div>
<div class="a" style="left:486px;top:228px;width:1px;height:18px;background:#c6c6c6"></div>
<div class="a" style="left:557px;top:228px;width:1px;height:18px;background:#c6c6c6"></div>
<div class="a" style="left:586px;top:228px;width:1px;height:18px;background:#c6c6c6"></div>
<div class="a" style="left:660px;top:228px;width:1px;height:18px;background:#c6c6c6"></div>
<div class="a" style="left:723px;top:228px;width:1px;height:18px;background:#c6c6c6"></div>
<div class="a" style="left:822px;top:228px;width:1px;height:18px;background:#c6c6c6"></div>
<div class="a" style="left:897px;top:228px;width:1px;height:18px;background:#c6c6c6"></div>
<div class="a" style="left:28px;top:228px;width:1px;height:19px;background:#6c6c70"></div>
<div class="a" style="left:0;top:247px;width:28px;height:19px;background:#f0f0f0;border-top:1px solid #fff;border-left:1px solid #fff;border-bottom:1px solid #808080"></div>
<div class="a" style="left:2px;top:264px;width:26px;height:1px;background:#b4b4b4"></div>
<div class="a" style="left:27px;top:249px;width:1px;height:16px;background:#c4c4c4"></div>
<div class="a" style="left:7px;top:250px;width:13px;height:13px;background:#fff;border:1px solid #333"></div>
<div class="a" style="left:29px;top:247px;width:925px;height:18px;background:#ffffff"></div>
<div class="a" style="left:29px;top:265px;width:925px;height:1px;background:#c6c6c6"></div>
<div class="t" style="left:-8.5px;width:100px;text-align:right;top:251px;color:#000">14187</div>
<div class="t" style="left:28.8px;width:100px;text-align:right;top:251px;color:#000">2</div>
<div class="t" style="left:81.5px;width:100px;text-align:right;top:251px;color:#000">55817</div>
<div class="t" style="left:185.6px;top:251px;color:#000;transform:scaleX(0.898);transform-origin:0 0;">TRANSFER CABEDAL - FLAMINGO</div>
<div class="t" style="left:380.2px;top:251px;color:#000;transform:scaleX(0.87);transform-origin:0 0;">DISCOVERY</div>
<div class="t" style="left:454.3px;width:100px;text-align:right;top:251px;color:#000">14,000</div>
<div class="t" style="left:558.9px;top:251px;color:#000;transform:scaleX(0.87);transform-origin:0 0;">UN</div>
<div class="t" style="left:588.5px;top:251px;color:#000;">06/01/2022</div>
<div class="t" style="left:620.5px;width:100px;text-align:right;top:251px;color:#000">14,000</div>
<div class="t" style="left:725.6px;top:251px;color:#000;transform:scaleX(0.915);transform-origin:0 0;">ALMOX. ANEXO 2</div>
<div class="t" style="left:823.8px;top:251px;color:#000;transform:scaleX(0.85);transform-origin:0 0;">PEDRO</div>
<div class="t" style="left:899.8px;top:251px;color:#000;transform:scaleX(0.95);transform-origin:0 0;">5-Saída interna</div>
<div class="a" style="left:94px;top:247px;width:1px;height:18px;background:#c6c6c6"></div>
<div class="a" style="left:131px;top:247px;width:1px;height:18px;background:#c6c6c6"></div>
<div class="a" style="left:184px;top:247px;width:1px;height:18px;background:#c6c6c6"></div>
<div class="a" style="left:378px;top:247px;width:1px;height:18px;background:#c6c6c6"></div>
<div class="a" style="left:486px;top:247px;width:1px;height:18px;background:#c6c6c6"></div>
<div class="a" style="left:557px;top:247px;width:1px;height:18px;background:#c6c6c6"></div>
<div class="a" style="left:586px;top:247px;width:1px;height:18px;background:#c6c6c6"></div>
<div class="a" style="left:660px;top:247px;width:1px;height:18px;background:#c6c6c6"></div>
<div class="a" style="left:723px;top:247px;width:1px;height:18px;background:#c6c6c6"></div>
<div class="a" style="left:822px;top:247px;width:1px;height:18px;background:#c6c6c6"></div>
<div class="a" style="left:897px;top:247px;width:1px;height:18px;background:#c6c6c6"></div>
<div class="a" style="left:28px;top:247px;width:1px;height:19px;background:#6c6c70"></div>
<div class="a" style="left:0;top:266px;width:28px;height:19px;background:#f0f0f0;border-top:1px solid #fff;border-left:1px solid #fff;border-bottom:1px solid #808080"></div>
<div class="a" style="left:2px;top:283px;width:26px;height:1px;background:#b4b4b4"></div>
<div class="a" style="left:27px;top:268px;width:1px;height:16px;background:#c4c4c4"></div>
<div class="a" style="left:7px;top:269px;width:13px;height:13px;background:#fff;border:1px solid #333"></div>
<div class="a" style="left:29px;top:266px;width:925px;height:18px;background:#fffcd4"></div>
<div class="a" style="left:29px;top:284px;width:925px;height:1px;background:#c6c6c6"></div>
<div class="t" style="left:-8.5px;width:100px;text-align:right;top:270px;color:#000">14187</div>
<div class="t" style="left:28.8px;width:100px;text-align:right;top:270px;color:#000">3</div>
<div class="t" style="left:81.5px;width:100px;text-align:right;top:270px;color:#000">55852</div>
<div class="t" style="left:185.6px;top:270px;color:#000;transform:scaleX(0.898);transform-origin:0 0;">TRANSFER SOLA LATERAL-AMARELO</div>
<div class="t" style="left:380.2px;top:270px;color:#000;transform:scaleX(0.87);transform-origin:0 0;">DISCOVERY</div>
<div class="t" style="left:454.3px;width:100px;text-align:right;top:270px;color:#000">14,000</div>
<div class="t" style="left:558.9px;top:270px;color:#000;transform:scaleX(0.87);transform-origin:0 0;">UN</div>
<div class="t" style="left:588.5px;top:270px;color:#000;">06/01/2022</div>
<div class="t" style="left:620.5px;width:100px;text-align:right;top:270px;color:#000">14,000</div>
<div class="t" style="left:725.6px;top:270px;color:#000;transform:scaleX(0.915);transform-origin:0 0;">ALMOX. ANEXO 2</div>
<div class="t" style="left:823.8px;top:270px;color:#000;transform:scaleX(0.85);transform-origin:0 0;">PEDRO</div>
<div class="t" style="left:899.8px;top:270px;color:#000;transform:scaleX(0.95);transform-origin:0 0;">5-Saída interna</div>
<div class="a" style="left:94px;top:266px;width:1px;height:18px;background:#c6c6c6"></div>
<div class="a" style="left:131px;top:266px;width:1px;height:18px;background:#c6c6c6"></div>
<div class="a" style="left:184px;top:266px;width:1px;height:18px;background:#c6c6c6"></div>
<div class="a" style="left:378px;top:266px;width:1px;height:18px;background:#c6c6c6"></div>
<div class="a" style="left:486px;top:266px;width:1px;height:18px;background:#c6c6c6"></div>
<div class="a" style="left:557px;top:266px;width:1px;height:18px;background:#c6c6c6"></div>
<div class="a" style="left:586px;top:266px;width:1px;height:18px;background:#c6c6c6"></div>
<div class="a" style="left:660px;top:266px;width:1px;height:18px;background:#c6c6c6"></div>
<div class="a" style="left:723px;top:266px;width:1px;height:18px;background:#c6c6c6"></div>
<div class="a" style="left:822px;top:266px;width:1px;height:18px;background:#c6c6c6"></div>
<div class="a" style="left:897px;top:266px;width:1px;height:18px;background:#c6c6c6"></div>
<div class="a" style="left:28px;top:266px;width:1px;height:19px;background:#6c6c70"></div>
<div class="a" style="left:0;top:285px;width:28px;height:19px;background:#f0f0f0;border-top:1px solid #fff;border-left:1px solid #fff;border-bottom:1px solid #808080"></div>
<div class="a" style="left:2px;top:302px;width:26px;height:1px;background:#b4b4b4"></div>
<div class="a" style="left:27px;top:287px;width:1px;height:16px;background:#c4c4c4"></div>
<div class="a" style="left:7px;top:288px;width:13px;height:13px;background:#fff;border:1px solid #333"></div>
<div class="a" style="left:29px;top:285px;width:925px;height:18px;background:#ffffff"></div>
<div class="a" style="left:29px;top:303px;width:925px;height:1px;background:#c6c6c6"></div>
<div class="t" style="left:-8.5px;width:100px;text-align:right;top:289px;color:#000">14187</div>
<div class="t" style="left:28.8px;width:100px;text-align:right;top:289px;color:#000">4</div>
<div class="t" style="left:81.5px;width:100px;text-align:right;top:289px;color:#000">55854</div>
<div class="t" style="left:185.6px;top:289px;color:#000;transform:scaleX(0.898);transform-origin:0 0;">TRANSFER CABEDAL - AMARELO</div>
<div class="t" style="left:380.2px;top:289px;color:#000;transform:scaleX(0.87);transform-origin:0 0;">DISCOVERY</div>
<div class="t" style="left:454.3px;width:100px;text-align:right;top:289px;color:#000">14,000</div>
<div class="t" style="left:558.9px;top:289px;color:#000;transform:scaleX(0.87);transform-origin:0 0;">UN</div>
<div class="t" style="left:588.5px;top:289px;color:#000;">06/01/2022</div>
<div class="t" style="left:620.5px;width:100px;text-align:right;top:289px;color:#000">14,000</div>
<div class="t" style="left:725.6px;top:289px;color:#000;transform:scaleX(0.915);transform-origin:0 0;">ALMOX. ANEXO 2</div>
<div class="t" style="left:823.8px;top:289px;color:#000;transform:scaleX(0.85);transform-origin:0 0;">PEDRO</div>
<div class="t" style="left:899.8px;top:289px;color:#000;transform:scaleX(0.95);transform-origin:0 0;">5-Saída interna</div>
<div class="a" style="left:94px;top:285px;width:1px;height:18px;background:#c6c6c6"></div>
<div class="a" style="left:131px;top:285px;width:1px;height:18px;background:#c6c6c6"></div>
<div class="a" style="left:184px;top:285px;width:1px;height:18px;background:#c6c6c6"></div>
<div class="a" style="left:378px;top:285px;width:1px;height:18px;background:#c6c6c6"></div>
<div class="a" style="left:486px;top:285px;width:1px;height:18px;background:#c6c6c6"></div>
<div class="a" style="left:557px;top:285px;width:1px;height:18px;background:#c6c6c6"></div>
<div class="a" style="left:586px;top:285px;width:1px;height:18px;background:#c6c6c6"></div>
<div class="a" style="left:660px;top:285px;width:1px;height:18px;background:#c6c6c6"></div>
<div class="a" style="left:723px;top:285px;width:1px;height:18px;background:#c6c6c6"></div>
<div class="a" style="left:822px;top:285px;width:1px;height:18px;background:#c6c6c6"></div>
<div class="a" style="left:897px;top:285px;width:1px;height:18px;background:#c6c6c6"></div>
<div class="a" style="left:28px;top:285px;width:1px;height:19px;background:#6c6c70"></div>
<div class="a" style="left:0;top:304px;width:28px;height:19px;background:#f0f0f0;border-top:1px solid #fff;border-left:1px solid #fff;border-bottom:1px solid #808080"></div>
<div class="a" style="left:2px;top:321px;width:26px;height:1px;background:#b4b4b4"></div>
<div class="a" style="left:27px;top:306px;width:1px;height:16px;background:#c4c4c4"></div>
<div class="a" style="left:7px;top:307px;width:13px;height:13px;background:#fff;border:1px solid #333"></div>
<div class="a" style="left:29px;top:304px;width:925px;height:18px;background:#fffcd4"></div>
<div class="a" style="left:29px;top:322px;width:925px;height:1px;background:#c6c6c6"></div>
<div class="t" style="left:-8.5px;width:100px;text-align:right;top:308px;color:#000">14187</div>
<div class="t" style="left:28.8px;width:100px;text-align:right;top:308px;color:#000">5</div>
<div class="t" style="left:81.5px;width:100px;text-align:right;top:308px;color:#000">55815</div>
<div class="t" style="left:185.6px;top:308px;color:#000;transform:scaleX(0.898);transform-origin:0 0;">TRANSFER SOLA LATERAL-FLAMINGO</div>
<div class="t" style="left:380.2px;top:308px;color:#000;transform:scaleX(0.87);transform-origin:0 0;">DISCOVERY</div>
<div class="t" style="left:454.3px;width:100px;text-align:right;top:308px;color:#000">60,000</div>
<div class="t" style="left:558.9px;top:308px;color:#000;transform:scaleX(0.87);transform-origin:0 0;">UN</div>
<div class="t" style="left:588.5px;top:308px;color:#000;">06/01/2022</div>
<div class="t" style="left:620.5px;width:100px;text-align:right;top:308px;color:#000">60,000</div>
<div class="t" style="left:725.6px;top:308px;color:#000;transform:scaleX(0.915);transform-origin:0 0;">ALMOX. ANEXO 2</div>
<div class="t" style="left:823.8px;top:308px;color:#000;transform:scaleX(0.85);transform-origin:0 0;">PEDRO</div>
<div class="t" style="left:899.8px;top:308px;color:#000;transform:scaleX(0.95);transform-origin:0 0;">5-Saída interna</div>
<div class="a" style="left:94px;top:304px;width:1px;height:18px;background:#c6c6c6"></div>
<div class="a" style="left:131px;top:304px;width:1px;height:18px;background:#c6c6c6"></div>
<div class="a" style="left:184px;top:304px;width:1px;height:18px;background:#c6c6c6"></div>
<div class="a" style="left:378px;top:304px;width:1px;height:18px;background:#c6c6c6"></div>
<div class="a" style="left:486px;top:304px;width:1px;height:18px;background:#c6c6c6"></div>
<div class="a" style="left:557px;top:304px;width:1px;height:18px;background:#c6c6c6"></div>
<div class="a" style="left:586px;top:304px;width:1px;height:18px;background:#c6c6c6"></div>
<div class="a" style="left:660px;top:304px;width:1px;height:18px;background:#c6c6c6"></div>
<div class="a" style="left:723px;top:304px;width:1px;height:18px;background:#c6c6c6"></div>
<div class="a" style="left:822px;top:304px;width:1px;height:18px;background:#c6c6c6"></div>
<div class="a" style="left:897px;top:304px;width:1px;height:18px;background:#c6c6c6"></div>
<div class="a" style="left:28px;top:304px;width:1px;height:19px;background:#6c6c70"></div>
<div class="a" style="left:0;top:323px;width:28px;height:19px;background:#f0f0f0;border-top:1px solid #fff;border-left:1px solid #fff;border-bottom:1px solid #808080"></div>
<div class="a" style="left:2px;top:340px;width:26px;height:1px;background:#b4b4b4"></div>
<div class="a" style="left:27px;top:325px;width:1px;height:16px;background:#c4c4c4"></div>
<div class="a" style="left:7px;top:326px;width:13px;height:13px;background:#fff;border:1px solid #333"></div>
<div class="a" style="left:29px;top:323px;width:925px;height:18px;background:#ffffff"></div>
<div class="a" style="left:29px;top:341px;width:925px;height:1px;background:#c6c6c6"></div>
<div class="t" style="left:-8.5px;width:100px;text-align:right;top:327px;color:#000">14187</div>
<div class="t" style="left:28.8px;width:100px;text-align:right;top:327px;color:#000">6</div>
<div class="t" style="left:81.5px;width:100px;text-align:right;top:327px;color:#000">55817</div>
<div class="t" style="left:185.6px;top:327px;color:#000;transform:scaleX(0.898);transform-origin:0 0;">TRANSFER CABEDAL - FLAMINGO</div>
<div class="t" style="left:380.2px;top:327px;color:#000;transform:scaleX(0.87);transform-origin:0 0;">DISCOVERY</div>
<div class="t" style="left:454.3px;width:100px;text-align:right;top:327px;color:#000">60,000</div>
<div class="t" style="left:558.9px;top:327px;color:#000;transform:scaleX(0.87);transform-origin:0 0;">UN</div>
<div class="t" style="left:588.5px;top:327px;color:#000;">06/01/2022</div>
<div class="t" style="left:620.5px;width:100px;text-align:right;top:327px;color:#000">60,000</div>
<div class="t" style="left:725.6px;top:327px;color:#000;transform:scaleX(0.915);transform-origin:0 0;">ALMOX. ANEXO 2</div>
<div class="t" style="left:823.8px;top:327px;color:#000;transform:scaleX(0.85);transform-origin:0 0;">PEDRO</div>
<div class="t" style="left:899.8px;top:327px;color:#000;transform:scaleX(0.95);transform-origin:0 0;">5-Saída interna</div>
<div class="a" style="left:94px;top:323px;width:1px;height:18px;background:#c6c6c6"></div>
<div class="a" style="left:131px;top:323px;width:1px;height:18px;background:#c6c6c6"></div>
<div class="a" style="left:184px;top:323px;width:1px;height:18px;background:#c6c6c6"></div>
<div class="a" style="left:378px;top:323px;width:1px;height:18px;background:#c6c6c6"></div>
<div class="a" style="left:486px;top:323px;width:1px;height:18px;background:#c6c6c6"></div>
<div class="a" style="left:557px;top:323px;width:1px;height:18px;background:#c6c6c6"></div>
<div class="a" style="left:586px;top:323px;width:1px;height:18px;background:#c6c6c6"></div>
<div class="a" style="left:660px;top:323px;width:1px;height:18px;background:#c6c6c6"></div>
<div class="a" style="left:723px;top:323px;width:1px;height:18px;background:#c6c6c6"></div>
<div class="a" style="left:822px;top:323px;width:1px;height:18px;background:#c6c6c6"></div>
<div class="a" style="left:897px;top:323px;width:1px;height:18px;background:#c6c6c6"></div>
<div class="a" style="left:28px;top:323px;width:1px;height:19px;background:#6c6c70"></div>
<div class="a" style="left:0;top:342px;width:28px;height:19px;background:#f0f0f0;border-top:1px solid #fff;border-left:1px solid #fff;border-bottom:1px solid #808080"></div>
<div class="a" style="left:2px;top:359px;width:26px;height:1px;background:#b4b4b4"></div>
<div class="a" style="left:27px;top:344px;width:1px;height:16px;background:#c4c4c4"></div>
<div class="a" style="left:7px;top:345px;width:13px;height:13px;background:#fff;border:1px solid #333"></div>
<div class="a" style="left:29px;top:342px;width:925px;height:18px;background:#fffcd4"></div>
<div class="a" style="left:29px;top:360px;width:925px;height:1px;background:#c6c6c6"></div>
<div class="t" style="left:-8.5px;width:100px;text-align:right;top:346px;color:#000">14187</div>
<div class="t" style="left:28.8px;width:100px;text-align:right;top:346px;color:#000">7</div>
<div class="t" style="left:81.5px;width:100px;text-align:right;top:346px;color:#000">55852</div>
<div class="t" style="left:185.6px;top:346px;color:#000;transform:scaleX(0.898);transform-origin:0 0;">TRANSFER SOLA LATERAL-AMARELO</div>
<div class="t" style="left:380.2px;top:346px;color:#000;transform:scaleX(0.87);transform-origin:0 0;">DISCOVERY</div>
<div class="t" style="left:454.3px;width:100px;text-align:right;top:346px;color:#000">60,000</div>
<div class="t" style="left:558.9px;top:346px;color:#000;transform:scaleX(0.87);transform-origin:0 0;">UN</div>
<div class="t" style="left:588.5px;top:346px;color:#000;">06/01/2022</div>
<div class="t" style="left:620.5px;width:100px;text-align:right;top:346px;color:#000">60,000</div>
<div class="t" style="left:725.6px;top:346px;color:#000;transform:scaleX(0.915);transform-origin:0 0;">ALMOX. ANEXO 2</div>
<div class="t" style="left:823.8px;top:346px;color:#000;transform:scaleX(0.85);transform-origin:0 0;">PEDRO</div>
<div class="t" style="left:899.8px;top:346px;color:#000;transform:scaleX(0.95);transform-origin:0 0;">5-Saída interna</div>
<div class="a" style="left:94px;top:342px;width:1px;height:18px;background:#c6c6c6"></div>
<div class="a" style="left:131px;top:342px;width:1px;height:18px;background:#c6c6c6"></div>
<div class="a" style="left:184px;top:342px;width:1px;height:18px;background:#c6c6c6"></div>
<div class="a" style="left:378px;top:342px;width:1px;height:18px;background:#c6c6c6"></div>
<div class="a" style="left:486px;top:342px;width:1px;height:18px;background:#c6c6c6"></div>
<div class="a" style="left:557px;top:342px;width:1px;height:18px;background:#c6c6c6"></div>
<div class="a" style="left:586px;top:342px;width:1px;height:18px;background:#c6c6c6"></div>
<div class="a" style="left:660px;top:342px;width:1px;height:18px;background:#c6c6c6"></div>
<div class="a" style="left:723px;top:342px;width:1px;height:18px;background:#c6c6c6"></div>
<div class="a" style="left:822px;top:342px;width:1px;height:18px;background:#c6c6c6"></div>
<div class="a" style="left:897px;top:342px;width:1px;height:18px;background:#c6c6c6"></div>
<div class="a" style="left:28px;top:342px;width:1px;height:19px;background:#6c6c70"></div>
</div>
<div class="a" style="left:1126px;top:94px;width:17px;height:353px;background:#f0f0f0"></div>
<div class="a" style="left:1127px;top:111px;width:15px;height:257px;background:#cdcdcd"></div>
<svg class="a" style="left:1130px;top:99px" width="9" height="8"><path d="M1 6 L4.5 2.5 L8 6" stroke="#606060" stroke-width="1.6" fill="none"/></svg>
<svg class="a" style="left:1130px;top:435px" width="9" height="8"><path d="M1 2 L4.5 5.5 L8 2" stroke="#606060" stroke-width="1.6" fill="none"/></svg>
<div class="a" style="left:172px;top:447px;width:971px;height:17px;background:#f0f0f0"></div>
<div class="a" style="left:218px;top:448px;width:573px;height:15px;background:#cdcdcd"></div>
<svg class="a" style="left:205px;top:451px" width="8" height="9"><path d="M6 1 L2.5 4.5 L6 8" stroke="#606060" stroke-width="1.6" fill="none"/></svg>
<svg class="a" style="left:1114px;top:451px" width="8" height="9"><path d="M2 1 L5.5 4.5 L2 8" stroke="#606060" stroke-width="1.6" fill="none"/></svg>
<div class="btn" style="left:172px;top:477px;width:98px;height:20px"></div>
<div class="btn" style="left:273px;top:477px;width:98px;height:20px"></div>
<div class="btn" style="left:374px;top:477px;width:98px;height:20px"></div>
<div class="btn" style="left:475px;top:477px;width:98px;height:20px"></div>
<div class="btn" style="left:576px;top:477px;width:98px;height:20px"></div>
<div class="btn" style="left:172px;top:500px;width:98px;height:20px"></div>
<div class="btn" style="left:273px;top:500px;width:84px;height:20px"></div>
<div class="btn" style="left:359px;top:500px;width:11px;height:20px"></div>
<svg class="a" style="left:361px;top:508px" width="7" height="4"><path d="M0 0 H7 L3.5 3.5 Z" fill="#000"/></svg>
<div class="btn" style="left:374px;top:500px;width:84px;height:20px"></div>
<div class="btn" style="left:460px;top:500px;width:11px;height:20px"></div>
<svg class="a" style="left:462px;top:508px" width="7" height="4"><path d="M0 0 H7 L3.5 3.5 Z" fill="#000"/></svg>
<div class="btn" style="left:475px;top:500px;width:84px;height:20px"></div>
<div class="btn" style="left:561px;top:500px;width:11px;height:20px"></div>
<svg class="a" style="left:563px;top:508px" width="7" height="4"><path d="M0 0 H7 L3.5 3.5 Z" fill="#000"/></svg>
<div class="btn" style="left:576px;top:500px;width:98px;height:20px"></div>
<div class="btn" style="left:172px;top:523px;width:98px;height:20px"></div>
<div class="btn" style="left:273px;top:523px;width:98px;height:20px"></div>
<div class="btn" style="left:374px;top:523px;width:98px;height:20px"></div>
<div class="btn" style="left:475px;top:523px;width:98px;height:20px"></div>
<div class="btn" style="left:576px;top:523px;width:98px;height:20px"></div>
<div class="t" style="left:215.9px;top:482px;">Incluir</div>
<div class="a" style="left:216px;top:492px;width:4px;height:1px;background:#000"></div>
<div class="t" style="left:315.8px;top:482px;">Alterar</div>
<div class="a" style="left:323px;top:492px;width:4px;height:1px;background:#000"></div>
<div class="t" style="left:407.7px;top:482px;letter-spacing:-0.09px">Consultar</div>
<div class="a" style="left:408px;top:492px;width:8px;height:1px;background:#000"></div>
<div class="t" style="left:517.6px;top:482px;letter-spacing:-0.13px">Excluir</div>
<div class="a" style="left:518px;top:492px;width:7px;height:1px;background:#000"></div>
<div class="t" style="left:612.7px;top:482px;letter-spacing:-0.11px">Cancelar</div>
<div class="a" style="left:627px;top:492px;width:7px;height:1px;background:#000"></div>
<div class="t" style="left:200px;top:505px;">Atender item</div>
<div class="a" style="left:207px;top:515px;width:4px;height:1px;background:#000"></div>
<div class="t" style="left:296px;top:505px;letter-spacing:0.1px">Atender req</div>
<div class="t" style="left:402.6px;top:505px;letter-spacing:-0.2px">Gerar OP</div>
<div class="t" style="left:495.7px;top:505px;letter-spacing:0.16px">Ger.req.com</div>
<div class="t" style="left:614.8px;top:505px;letter-spacing:-0.14px">Imprimir</div>
<div class="t" style="left:198px;top:528px;letter-spacing:-0.14px">Atendimentos</div>
<div class="t" style="left:297.5px;top:528px;letter-spacing:-0.05px">Fornecedores</div>
<div class="t" style="left:411.2px;top:528px;letter-spacing:0.08px">Estoque</div>
<div class="t" style="left:513.3px;top:528px;letter-spacing:0.15px">Produto</div>
<div class="t" style="left:598.5px;top:528px;letter-spacing:-0.08px">Itm OP Origem</div>
<svg width="0" height="0" style="position:absolute"><defs><filter id="sh" x="-30%" y="-30%" width="160%" height="160%"><feGaussianBlur in="SourceAlpha" stdDev="0.6"/><feOffset dx="0.8" dy="0.8"/><feComponentTransfer><feFuncA type="linear" slope="0.55"/></feComponentTransfer><feMerge><feMergeNode/><feMergeNode in="SourceGraphic"/></feMerge></filter><linearGradient id="winfill" x1="0" y1="0" x2="1" y2="1"><stop offset="0" stop-color="#ffffff"/><stop offset="1" stop-color="#dcd8ff"/></linearGradient><linearGradient id="pagefill" x1="0" y1="0" x2="1" y2="1"><stop offset="0" stop-color="#ffffff"/><stop offset="1" stop-color="#dfe8f6"/></linearGradient><radialGradient id="lens" cx="0.35" cy="0.3" r="0.8"><stop offset="0" stop-color="#e8fbff"/><stop offset="0.5" stop-color="#9adcf8"/><stop offset="1" stop-color="#60b8e8"/></radialGradient><linearGradient id="gold" x1="0" y1="0" x2="1" y2="1"><stop offset="0" stop-color="#f8d868"/><stop offset="1" stop-color="#c89018"/></linearGradient><linearGradient id="cubeb" x1="0" y1="0" x2="1" y2="1"><stop offset="0" stop-color="#40a8ff"/><stop offset="1" stop-color="#0a50d0"/></linearGradient><linearGradient id="cubey" x1="0" y1="0" x2="1" y2="1"><stop offset="0" stop-color="#fff040"/><stop offset="1" stop-color="#e09000"/></linearGradient><linearGradient id="cubeg" x1="0" y1="0" x2="1" y2="1"><stop offset="0" stop-color="#90f060"/><stop offset="1" stop-color="#109010"/></linearGradient><linearGradient id="body" x1="0" y1="0" x2="0" y2="1"><stop offset="0" stop-color="#48a898"/><stop offset="1" stop-color="#186848"/></linearGradient></defs></svg>
<svg class="a" style="left:199px;top:481px;overflow:visible" width="12" height="12" viewBox="0 0 12 12"><path d="M4.3 0.3h3.4v4h4v3.4h-4v4h-3.4v-4h-4v-3.4h4z" fill="#1a6ae8" stroke="#0c50c8" stroke-width="0.5"/><path d="M5 1 V5" stroke="#5a9af8" stroke-width="0.8"/></svg>
<svg class="a" style="left:297px;top:480px;overflow:visible" width="14" height="14" viewBox="0 0 14 14"><rect x="0.7" y="0.7" width="12.6" height="12.6" rx="1.8" fill="url(#winfill)" stroke="#0a9cff" stroke-width="1.4"/><rect x="1.2" y="1.2" width="11.6" height="1.8" fill="#0a9cff"/><path d="M2.5 2 H11.5" stroke="#a8dcff" stroke-width="0.6"/><g filter="url(#sh)"><ellipse cx="9.3" cy="6.3" rx="4.3" ry="2.9" fill="url(#gold)"/><path d="M2.2 7.3 Q4 5.2 6.5 5.4 L7 8 Q5 9.5 3.5 8.5 Z" fill="#d8a030"/><ellipse cx="9.5" cy="5.2" rx="2" ry="1" fill="#fff4d0" opacity="0.8"/></g></svg>
<svg class="a" style="left:391px;top:480px;overflow:visible" width="14" height="14" viewBox="0 0 14 14"><rect x="0.7" y="0.7" width="12.6" height="12.6" rx="1.8" fill="url(#winfill)" stroke="#0a9cff" stroke-width="1.4"/><rect x="1.2" y="1.2" width="11.6" height="1.8" fill="#0a9cff"/><path d="M2.5 2 H11.5" stroke="#a8dcff" stroke-width="0.6"/><circle cx="6.2" cy="7.1" r="2.9" fill="url(#lens)" stroke="#6a6a6a" stroke-width="1.1"/><path d="M8.6 9.6 L11.6 12.6" stroke="#f07830" stroke-width="2.2"/></svg>
<svg class="a" style="left:501px;top:485px;overflow:visible" width="12" height="4" viewBox="0 0 12 4"><rect width="12" height="4" fill="#1a6ae8"/><rect x="0.5" y="0.5" width="11" height="1" fill="#4a8af0"/></svg>
<svg class="a" style="left:594px;top:479px;overflow:visible" width="15" height="15" viewBox="0 0 15 15"><g filter="url(#sh)"><path d="M2.5 2.5 L11.5 11.5 M11.5 2.5 L2.5 11.5" stroke="#d83010" stroke-width="4.6" stroke-linecap="round"/><path d="M2.5 2.5 L11.5 11.5 M11.5 2.5 L2.5 11.5" stroke="#f85a28" stroke-width="3.4" stroke-linecap="round"/></g></svg>
<svg class="a" style="left:178px;top:501px;overflow:visible" width="18" height="15" viewBox="0 0 18 15"><g filter="url(#sh)"><path d="M4 7 L7.5 10.8 L14.8 3.2" stroke="#1c9018" stroke-width="4.2" stroke-linecap="round" stroke-linejoin="round" fill="none"/><path d="M4 7 L7.5 10.8 L14.8 3.2" stroke="#3cc030" stroke-width="2.6" stroke-linecap="round" stroke-linejoin="round" fill="none"/></g></svg>
<svg class="a" style="left:277px;top:502px;overflow:visible" width="13" height="14" viewBox="0 0 13 14"><g filter="url(#sh)"><path d="M0.6 0.6 H8.6 L12 4 V13.4 H0.6 Z" fill="url(#pagefill)" stroke="#6a7ba8" stroke-width="1.1"/><path d="M8.4 0.6 V4.2 H12" fill="#c8d4ec" stroke="#6a7ba8" stroke-width="0.9"/></g><path d="M3 8.5 L5.2 10.8 L9.5 6.5" stroke="#20a018" stroke-width="2.2" stroke-linecap="round" fill="none"/></svg>
<svg class="a" style="left:385px;top:502px;overflow:visible" width="14" height="15" viewBox="0 0 14 15"><g filter="url(#sh)"><path d="M0.6 0.6 H8.6 L12 4 V13.4 H0.6 Z" fill="url(#pagefill)" stroke="#6a7ba8" stroke-width="1.1"/><path d="M8.4 0.6 V4.2 H12" fill="#c8d4ec" stroke="#6a7ba8" stroke-width="0.9"/></g><g filter="url(#sh)"><path d="M3.5 9 L8 7.5 L13.5 9 V13.5 L8.5 15 L3.5 13.5 Z" fill="#f06030"/><path d="M3.5 9 L8 7.5 L13 9 L8.5 10.5 Z" fill="#8a8a8a"/><path d="M11 3.5 L13.5 5 V8.5 L11 8 Z" fill="#e03010"/></g></svg>
<svg class="a" style="left:478px;top:503px;overflow:visible" width="13" height="14" viewBox="0 0 13 14"><g filter="url(#sh)"><path d="M0.6 0.6 H8.6 L12 4 V13.4 H0.6 Z" fill="url(#pagefill)" stroke="#6a7ba8" stroke-width="1.1"/><path d="M8.4 0.6 V4.2 H12" fill="#c8d4ec" stroke="#6a7ba8" stroke-width="0.9"/></g><circle cx="6" cy="1.8" r="2.6" fill="#e82810"/><circle cx="5.2" cy="1.2" r="0.9" fill="#ff8a70"/><path d="M10.2 6.5 Q9.5 5 8 5 Q5.8 5 5.8 6.8 Q5.8 8.3 8 8.7 Q10.5 9.2 10.5 11 Q10.5 13 8 13 Q6 13 5.3 11.5 M8 3.8 V14.8" stroke="#189a20" stroke-width="1.6" fill="none"/></svg>
<svg class="a" style="left:596px;top:502px;overflow:visible" width="15" height="14" viewBox="0 0 15 14"><g filter="url(#sh)"><path d="M1.5 1 L8 0.6 L9.5 4 L2.5 4.5 Z" fill="#e8f8ff" stroke="#a0a8b0" stroke-width="0.6"/><path d="M0.8 6 Q0.8 4.5 2.5 4.5 L11 4.5 Q14.2 5.5 14.2 8.5 L14.2 10.5 Q14.2 13 11 13.2 L3.5 13.2 Q0.8 13 0.8 10.5 Z" fill="#e4e6e8" stroke="#8a8c90" stroke-width="0.8"/><path d="M3.5 2.5 L9 2 L12 9 L6 10 Z" fill="#4aa0f0"/><path d="M2 10.8 L13.5 10.5" stroke="#404040" stroke-width="1.2"/></g></svg>
<svg class="a" style="left:179px;top:525px;overflow:visible" width="13" height="14" viewBox="0 0 13 14"><g filter="url(#sh)"><path d="M0.6 0.6 H8.6 L12 4 V13.4 H0.6 Z" fill="url(#pagefill)" stroke="#6a7ba8" stroke-width="1.1"/><path d="M8.4 0.6 V4.2 H12" fill="#c8d4ec" stroke="#6a7ba8" stroke-width="0.9"/></g><path d="M2.5 6 H9 M2.5 8 H7" stroke="#8aa0d0" stroke-width="0.9"/><path d="M5.5 10.5 L7.8 12.8 L12.2 7.2" stroke="#1a66e0" stroke-width="2.3" stroke-linecap="round" fill="none"/></svg>
<svg class="a" style="left:281px;top:525px;overflow:visible" width="13" height="15" viewBox="0 0 13 15"><g filter="url(#sh)"><path d="M0.3 14.5 Q0.3 8.2 6.3 8.2 Q12.3 8.2 12.3 14.5 Z" fill="url(#body)"/><circle cx="6.3" cy="5" r="3.2" fill="#ffb060"/><path d="M2.8 4.8 Q2.5 0.8 6.3 0.8 Q10 0.8 9.8 4.6 Q8.5 2.8 6 3 Q4 3 2.8 4.8 Z" fill="#3a2008"/></g></svg>
<svg class="a" style="left:395px;top:526px;overflow:visible" width="14" height="14" viewBox="0 0 14 14"><g filter="url(#sh)"><path d="M6 0.5 L8.5 1.8 L11 1.5 L11.8 4 L13 6.5 L11.8 9 L11 11.5 L8.5 11.2 L6 12.5 L3.5 11.2 L1.2 10 L0.8 6.5 L1.2 3 L3.5 1.8 Z" fill="url(#gold)" stroke="#b88010" stroke-width="0.5"/><circle cx="6.8" cy="6.8" r="3.4" fill="url(#lens)" stroke="#7a7a7a" stroke-width="1"/><path d="M9.8 10 L12 12.5" stroke="#f07830" stroke-width="2.2"/></g></svg>
<svg class="a" style="left:495px;top:525px;overflow:visible" width="15" height="14" viewBox="0 0 15 14"><g filter="url(#sh)"><rect x="2.7" y="0.2" width="8.3" height="7" rx="1.2" fill="url(#cubeb)"/><rect x="0.2" y="5.2" width="6" height="8" rx="1" fill="url(#cubey)"/><rect x="6" y="6" width="8.2" height="8" rx="1.2" fill="url(#cubeg)"/></g></svg>
<svg class="a" style="left:580px;top:525px;overflow:visible" width="15" height="14" viewBox="0 0 15 14"><g filter="url(#sh)"><rect x="2.7" y="0.2" width="8.3" height="7" rx="1.2" fill="url(#cubeb)"/><rect x="0.2" y="5.2" width="6" height="8" rx="1" fill="url(#cubey)"/><rect x="6" y="6" width="8.2" height="8" rx="1.2" fill="url(#cubeg)"/></g></svg>
<div class="btn" style="left:688px;top:477px;width:23px;height:20px"></div>
<div class="btn" style="left:714px;top:477px;width:23px;height:20px"></div>
<div class="btn" style="left:740px;top:477px;width:23px;height:20px"></div>
<div class="btn" style="left:766px;top:477px;width:23px;height:20px"></div>
<div class="btn" style="left:792px;top:477px;width:23px;height:20px"></div>
<div class="btn" style="left:818px;top:477px;width:23px;height:20px"></div>
<div class="btn" style="left:844px;top:477px;width:23px;height:20px"></div>
<div class="btn" style="left:688px;top:500px;width:23px;height:20px"></div>
<div class="btn" style="left:714px;top:500px;width:23px;height:20px"></div>
<div class="btn" style="left:740px;top:500px;width:23px;height:20px"></div>
<div class="btn" style="left:766px;top:500px;width:23px;height:20px"></div>
<div class="btn" style="left:882px;top:477px;width:23px;height:20px"></div>
<div class="btn" style="left:908px;top:477px;width:23px;height:20px"></div>
<div class="a" style="left:875px;top:476px;width:1px;height:22px;background:#a0a0a0"></div>
<div class="a" style="left:938px;top:476px;width:1px;height:22px;background:#a0a0a0"></div>
<svg class="a" style="left:691px;top:481px;overflow:visible" width="16" height="11" viewBox="0 0 16 11"><g filter="url(#sh)"><path d="M1 4 L5 1 L10 2.5 L14.5 6 L13 9 L9 8 L5 9 L1.5 7 Z" fill="#505458"/><path d="M4 2 L9 3.5" stroke="#a0a4a8" stroke-width="1"/><circle cx="7.3" cy="7.6" r="2.1" fill="url(#lens)" stroke="#404448" stroke-width="0.6"/><circle cx="12.5" cy="6.8" r="2.1" fill="url(#lens)" stroke="#404448" stroke-width="0.6"/></g></svg>
<svg class="a" style="left:716px;top:479px;overflow:visible" width="17" height="16" viewBox="0 0 17 16"><g filter="url(#sh)"><path d="M4.5 0.5 H13.5 L16.3 3.3 V15.3 H4.5 Z" fill="#dce8fa" stroke="#2a4a8a" stroke-width="1.1"/><path d="M7 13 H10 M13 6 V13 H9" stroke="#7a9ad0" stroke-width="0.9" fill="none"/><path d="M13.3 0.5 V3.5 H16.3" fill="#fff" stroke="#2a4a8a" stroke-width="0.8"/><rect x="0.5" y="0.8" width="10" height="9.5" rx="1.5" fill="#1a8a2a"/><rect x="3" y="2.5" width="7" height="7" fill="#e8f8d8"/><path d="M4.5 4 L8.5 8 M8.5 4 L4.5 8" stroke="#1a8a2a" stroke-width="1.5"/></g></svg>
<svg class="a" style="left:744px;top:479px;overflow:visible" width="13" height="14" viewBox="0 0 13 14"><g filter="url(#sh)"><path d="M0.6 0.6 H9 L12.4 4 V13.4 H0.6 Z" fill="#f4f6fc" stroke="#6a78a8" stroke-width="1.1"/><path d="M8.8 0.6 V4.2 H12.4" fill="#fff" stroke="#6a78a8" stroke-width="0.8"/><rect x="2.2" y="6" width="8.6" height="6" fill="#a8b6dc"/><path d="M2.2 5.3 H10.8" stroke="#8898c8" stroke-width="0.7"/></g></svg>
<svg class="a" style="left:769px;top:479px;overflow:visible" width="17" height="15" viewBox="0 0 17 15"><g filter="url(#sh)"><rect x="0.7" y="0.7" width="13.6" height="13.6" rx="1.8" fill="#eceaff" stroke="#0a9cff" stroke-width="1.4"/><rect x="1.2" y="1.2" width="12.6" height="2" fill="#0a9cff"/><path d="M2 6 H13 M2 8.5 H13 M2 11 H13 M6 4 V13 M9 4 V13" stroke="#c0c8f0" stroke-width="0.7"/><rect x="2.8" y="4" width="1.6" height="9.5" fill="#f05a28"/><ellipse cx="11.8" cy="5.3" rx="4.3" ry="2.9" fill="url(#gold)"/><path d="M5 6.3 Q7 4 9 5" stroke="#c89020" stroke-width="1.8" fill="none"/></g></svg>
<svg class="a" style="left:795px;top:479px;overflow:visible" width="15" height="15" viewBox="0 0 15 15"><g filter="url(#sh)"><rect x="0.7" y="0.7" width="13.6" height="13.6" rx="1.8" fill="#eceaff" stroke="#0a9cff" stroke-width="1.4"/><rect x="1.2" y="1.2" width="12.6" height="2" fill="#0a9cff"/><path d="M4.5 12.5 V6" stroke="#f01010" stroke-width="2"/><path d="M2 7 L4.5 3.8 L7 7 Z" fill="#f01010"/><path d="M10 4 V10" stroke="#108030" stroke-width="2"/><path d="M7.5 9 L10 12.5 L12.5 9 Z" fill="#108030"/></g></svg>
<svg class="a" style="left:822px;top:481px;overflow:visible" width="14" height="11" viewBox="0 0 14 11"><g filter="url(#sh)"><path d="M1 5 Q1 0.5 7 0.5 Q13.2 0.5 13.2 5 Q13.2 9.8 9 10 Q7.5 10 7 8.5 Q6.5 7 5 8 Q3 9.5 1.5 8 Q1 7 1 5 Z" fill="url(#gold)"/><ellipse cx="5" cy="3" rx="1.3" ry="1" fill="#4a90e8"/><ellipse cx="9" cy="3" rx="1.2" ry="1" fill="#40b040"/><ellipse cx="10.3" cy="6.5" rx="1.2" ry="0.9" fill="#e84040"/></g></svg>
<svg class="a" style="left:848px;top:481px;overflow:visible" width="15" height="11" viewBox="0 0 15 11"><g filter="url(#sh)"><path d="M0.5 5 L4 1 L11 0.8 L14.5 4.5 L12.5 9.5 L4.5 10.5 Z" fill="#f4f4f6" stroke="#b8bcc0" stroke-width="0.7"/><path d="M0.5 5 L4.5 6.5 L12.5 5 L14.5 4.5 L12.5 9.5 L4.5 10.5 Z" fill="#c8cacc"/><path d="M6 2 L10 1.6 L8 4.5 Z" fill="#2a80e8"/></g></svg>
<svg class="a" style="left:887px;top:481px;overflow:visible" width="12" height="12" viewBox="0 0 12 12"><rect x="0.5" y="0.5" width="11" height="11" fill="#fff" stroke="#505050" stroke-width="1"/><path d="M2.3 5.3 L5 8.5 L10.3 1.8" stroke="#1a3aa8" stroke-width="2.2" fill="none"/></svg>
<svg class="a" style="left:913px;top:481px;overflow:visible" width="12" height="12" viewBox="0 0 12 12"><defs><linearGradient id="cbg" x1="0" y1="0" x2="1" y2="1"><stop offset="0" stop-color="#f4f4f4"/><stop offset="1" stop-color="#ffffff"/></linearGradient></defs><rect x="0.5" y="0.5" width="11" height="11" fill="url(#cbg)" stroke="#606060" stroke-width="1"/></svg>
<svg class="a" style="left:692px;top:503px;overflow:visible" width="15" height="15" viewBox="0 0 15 15"><g filter="url(#sh)"><path d="M7.5 0.3 L9 2.3 L11.4 1.4 L11.8 3.9 L14.3 4.6 L13.1 6.9 L14.5 9 L12.2 10.2 L12 12.8 L9.5 12.6 L7.5 14.5 L5.7 12.6 L3.1 12.8 L2.9 10.2 L0.5 9 L1.9 6.9 L0.7 4.6 L3.2 3.9 L3.6 1.4 L6 2.3 Z" fill="#bcbcec" stroke="#7c7cc0" stroke-width="0.8"/><path d="M6 6.5 H9 V8.5 H6 Z" fill="#eeeefc" stroke="#9090c8" stroke-width="0.6"/></g></svg>
<svg class="a" style="left:718px;top:504px;overflow:visible" width="14" height="12" viewBox="0 0 14 12"><rect x="0.6" y="0.6" width="12.8" height="10.8" fill="#f4f4f8" stroke="#1a50c8" stroke-width="1.2"/><rect x="1" y="1" width="12" height="1.3" fill="#3a78e0"/><circle cx="3.4" cy="4.8" r="1.1" fill="#f08838"/><circle cx="3.4" cy="8.4" r="1.1" fill="#f08838"/><path d="M5.5 4.8 H7 M8 4.8 H11 M5.5 8.4 H7 M8 8.4 H11" stroke="#707888" stroke-width="0.8"/></svg>
<svg class="a" style="left:744px;top:502px;overflow:visible" width="14" height="15" viewBox="0 0 14 15"><g filter="url(#sh)"><path d="M0.5 10 L4 7.5 L10 7.5 L13 10 L13 12 L8 14.5 L1 12.5 Z" fill="#a8aaac"/><path d="M0.5 10 L4 7.5 L10 7.5 L13 10 L8 12 Z" fill="#f4f4f4"/><path d="M8 12 L13 10 L13 12 L8 14.5 Z" fill="#606264"/><path d="M3.8 0.5 H8.2 V4.5 H11 L6 9.5 L1 4.5 H3.8 Z" fill="#50d030" stroke="#20a010" stroke-width="0.5"/></g></svg>
<svg class="a" style="left:770px;top:502px;overflow:visible" width="13" height="15" viewBox="0 0 13 15"><g filter="url(#sh)"><rect x="0.7" y="0.7" width="11.3" height="13.3" rx="1.4" fill="#f4f4fc" stroke="#0a90f0" stroke-width="1.4"/><path d="M3.5 4.5 L5 6 L8.5 2.2 M3.5 9.5 L5 11 L8.5 7.2" stroke="#d81818" stroke-width="1.3" fill="none"/><path d="M3 5 V6.5 H4.5 M3 10 V11.5 H4.5" stroke="#909090" stroke-width="0.6" fill="none"/></g></svg>
<div class="btn" style="left:945px;top:477px;width:98px;height:20px"></div>
<div class="btn" style="left:1046px;top:477px;width:83px;height:20px"></div>
<div class="btn" style="left:1131px;top:477px;width:11px;height:20px"></div>
<svg class="a" style="left:1133px;top:485px" width="7" height="4"><path d="M0 0 H7 L3.5 3.5 Z" fill="#000"/></svg>
<div class="btn" style="left:1046px;top:509px;width:98px;height:42px"></div>
<div class="t" style="left:973.2px;top:482px;letter-spacing:-0.04px">F5-Atualizar</div>
<div class="a" style="left:1019px;top:492px;width:5px;height:1px;background:#000"></div>
<div class="t" style="left:1073.4px;top:482px;letter-spacing:0.02px">F9-Filtros</div>
<div class="t" style="left:1094.7px;top:525px;letter-spacing:-0.4px">Sair</div>
<div class="a" style="left:1095px;top:535px;width:6px;height:1px;background:#000"></div>
<svg class="a" style="left:955px;top:479px;overflow:visible" width="14" height="14" viewBox="0 0 14 14"><g filter="url(#sh)"><path d="M2.2 9.5 A5.2 5.2 0 0 1 5.5 1.9" stroke="#1a9a10" stroke-width="3.4" fill="none"/><path d="M7.8 1.6 A5.2 5.2 0 0 1 12 8" stroke="#3ac028" stroke-width="3.4" fill="none"/><path d="M10.8 11 A5.2 5.2 0 0 1 4 12" stroke="#28b018" stroke-width="3.4" fill="none"/><path d="M0.3 1.8 L5 0.8 L3.8 5.5 Z" fill="#1a9a10"/><path d="M13.6 1.6 L12.8 6.5 L9 3.5 Z" fill="#3ac028"/><path d="M6 8.5 L6.8 13.8 L2.5 11.8 Z" fill="#28b018"/><path d="M3 6 Q4 3.5 6 3" stroke="#9af080" stroke-width="1" fill="none"/><path d="M9.5 3 Q11 4.5 11 6.5" stroke="#9af080" stroke-width="1" fill="none"/></g></svg>
<svg class="a" style="left:1055px;top:479px;overflow:visible" width="15" height="15" viewBox="0 0 15 15"><defs><linearGradient id="fun" x1="0" y1="0" x2="1" y2="0"><stop offset="0" stop-color="#303234"/><stop offset="0.6" stop-color="#f8f8f8"/><stop offset="1" stop-color="#b0b2b4"/></linearGradient></defs><g filter="url(#sh)"><path d="M0.5 3 L6 10 V14 L9.5 14.5 V10 L14.5 3 Z" fill="#e8eaec" stroke="#8a8c90" stroke-width="0.7"/><ellipse cx="7.5" cy="3" rx="7" ry="2.6" fill="url(#fun)" stroke="#606264" stroke-width="0.6"/><path d="M6.5 10.5 L8.5 13.5 L13.5 6.2" stroke="#1a60e0" stroke-width="2.4" fill="none"/></g></svg>
<svg class="a" style="left:1076px;top:522px;overflow:visible" width="16" height="15" viewBox="0 0 16 15"><g filter="url(#sh)"><path d="M5.5 0.5 H14.5 V13.5 L8 14 Z" fill="#8a90cc" stroke="#5a60a0" stroke-width="0.6"/><path d="M6.5 1 L8 1.5 V13.5 L6.5 13" fill="#b0e0ff"/><rect x="9.5" y="3.3" width="2.6" height="1" fill="#e0e4ff"/><path d="M0.3 5 H4 V2.3 L8 7.2 L4 12 V9.3 H0.3 Z" fill="#60e040" stroke="#109010" stroke-width="0.8"/></g></svg>
<div class="bub" style="left:96px;top:222px"><i class="s"><b>5</b></i></div>
<div class="lbl" style="left:18.00px;top:230px;letter-spacing:-0.200px">Cancelar</div>
<div class="bub" style="left:96px;top:271px"><i class=""><b>4</b></i></div>
<div class="lbl" style="left:35.10px;top:279px;letter-spacing:-0.467px">Excluir</div>
<div class="bub" style="left:96px;top:319px"><i class=""><b>3</b></i></div>
<div class="lbl" style="left:11.40px;top:327px;letter-spacing:-0.550px">Consultar</div>
<div class="bub" style="left:96px;top:368px"><i class=""><b>2</b></i></div>
<div class="lbl" style="left:32.20px;top:376px;letter-spacing:0.233px">Alterar</div>
<div class="bub" style="left:96px;top:417px"><i class=""><b>1</b></i></div>
<div class="lbl" style="left:39.00px;top:425px;letter-spacing:-0.300px">Incluir</div>
<div class="bub" style="left:165px;top:578px"><i class="s"><b>6</b></i></div>
<div class="lbl" style="left:124.10px;top:618px;letter-spacing:0.436px">Atender item</div>
<div class="bub" style="left:275px;top:639px"><i class=""><b>7</b></i></div>
<div class="lbl" style="left:210.10px;top:679px;letter-spacing:-0.012px">Atender requisição</div>
<div class="bub" style="left:375px;top:578px"><i class=""><b>8</b></i></div>
<div class="lbl" style="left:277.00px;top:618px;letter-spacing:0.091px">Gerar Ordem de Produção</div>
<div class="bub" style="left:477px;top:639px"><i class=""><b>9</b></i></div>
<div class="lbl" style="left:386.90px;top:679px;letter-spacing:0.086px">Gerar requis.Compra/OC</div>
<div class="bub" style="left:575px;top:578px"><i class="d"><b>10</b></i></div>
<div class="lbl" style="left:553.80px;top:618px;letter-spacing:0.257px">Imprimir</div>
<div class="bub" style="left:212px;top:702px"><i class="d"><b>11</b></i></div>
<div class="lbl" style="left:166.90px;top:742px;letter-spacing:0.273px">Atendimentos</div>
<div class="bub" style="left:309px;top:761px"><i class="d"><b>12</b></i></div>
<div class="lbl" style="left:266.00px;top:801px;letter-spacing:-0.109px">Fornecedores</div>
<div class="bub" style="left:418px;top:702px"><i class="d"><b>13</b></i></div>
<div class="lbl" style="left:400.00px;top:742px;letter-spacing:-0.367px">Estoque</div>
<div class="bub" style="left:509px;top:761px"><i class="d"><b>14</b></i></div>
<div class="lbl" style="left:490.20px;top:801px;letter-spacing:0.200px">Produto</div>
<div class="bub" style="left:612px;top:702px"><i class="d"><b>15</b></i></div>
<div class="lbl" style="left:536.00px;top:742px;letter-spacing:-0.105px">Itens das OPs Origem</div>
<svg class="a" style="left:0;top:0" width="1180" height="838"><g stroke="#0f34a0" stroke-width="1.25"><line x1="125" y1="246" x2="594" y2="479"/><line x1="125" y1="295" x2="492" y2="481"/><line x1="125" y1="344" x2="385" y2="479"/><line x1="125" y1="393" x2="285" y2="479"/><line x1="125" y1="441" x2="197" y2="482"/><line x1="181.5" y1="513" x2="181.5" y2="580"/><line x1="291.5" y1="514" x2="291.5" y2="641"/><line x1="391.5" y1="513" x2="391.5" y2="580"/><line x1="493.5" y1="513" x2="493.5" y2="641"/><line x1="592" y1="513" x2="592" y2="580"/><line x1="228.5" y1="534" x2="228.5" y2="704"/><line x1="325.5" y1="541" x2="325.5" y2="763"/><line x1="434.3" y1="541" x2="434.3" y2="704"/><line x1="525.5" y1="542" x2="525.5" y2="763"/><line x1="628.6" y1="539" x2="628.6" y2="704"/></g></svg>
</body></html>
